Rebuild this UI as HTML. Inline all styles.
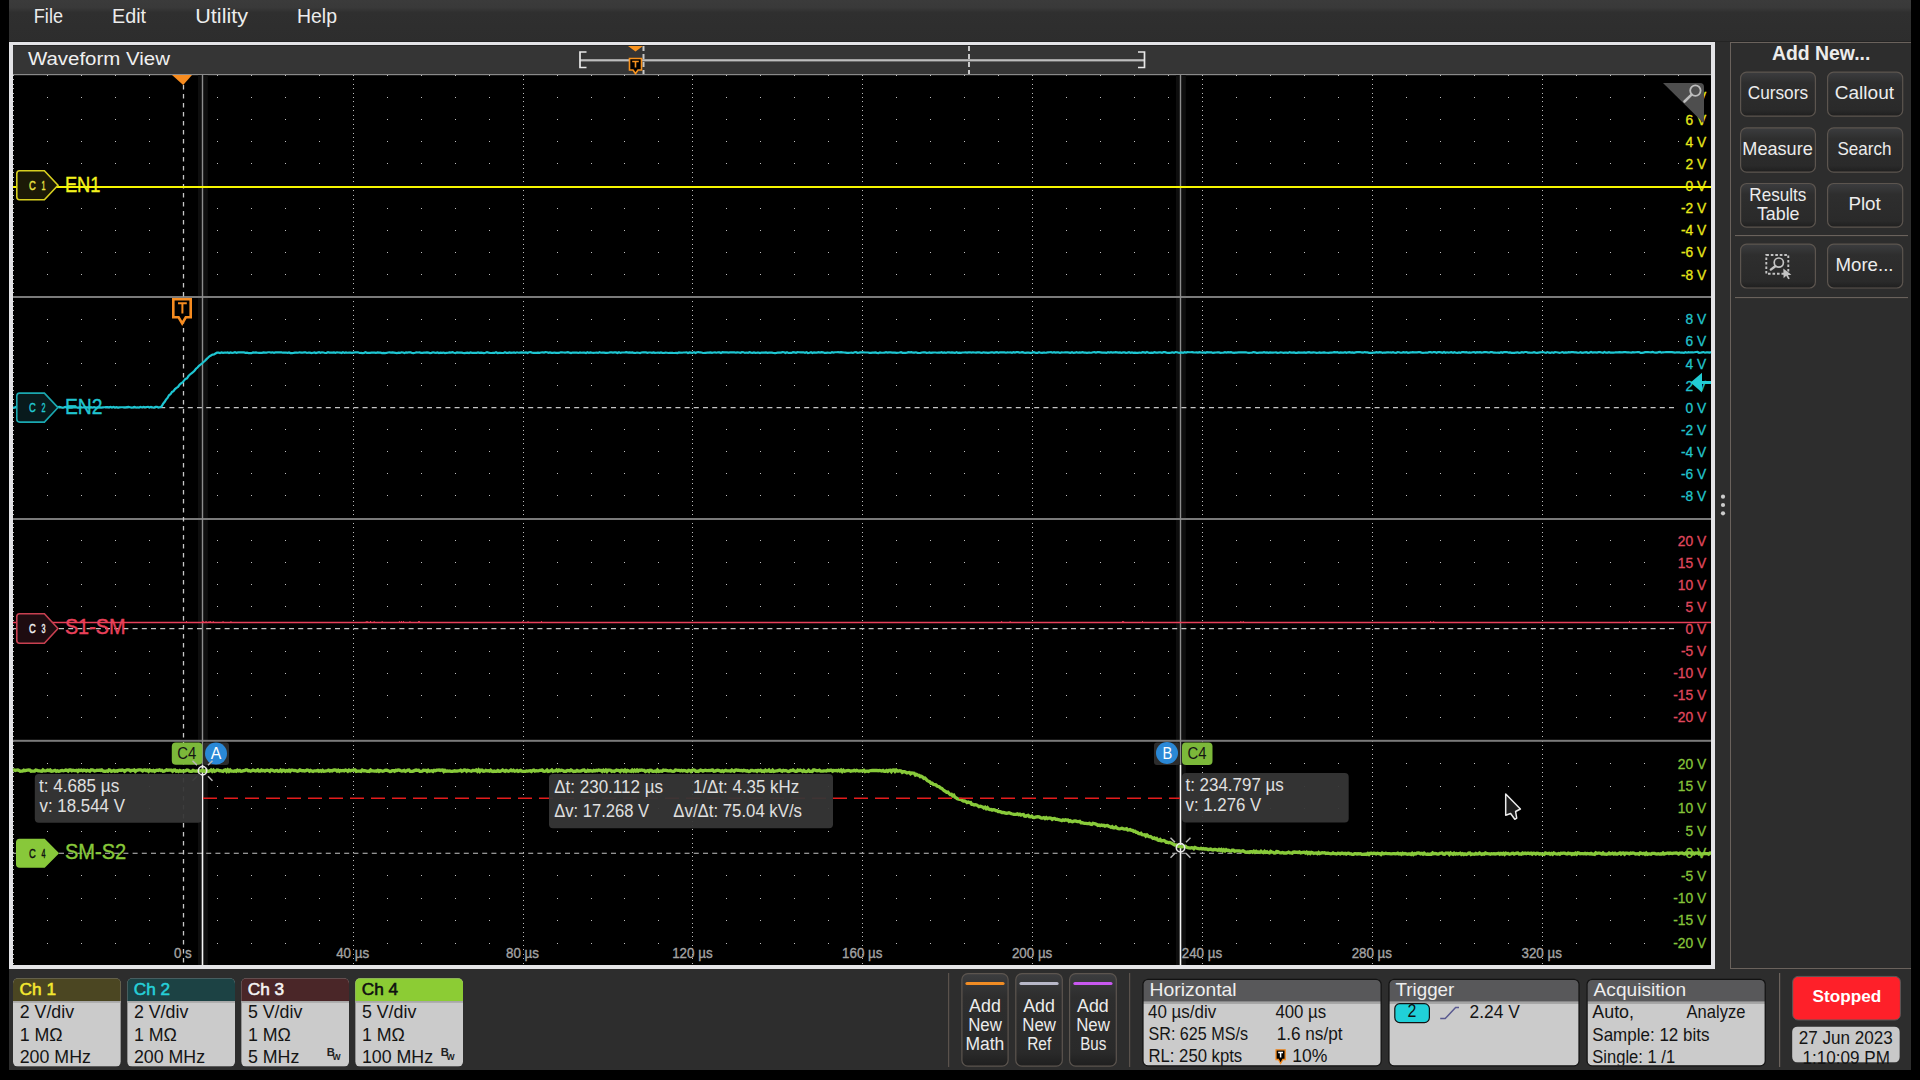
<!DOCTYPE html>
<html><head><meta charset="utf-8"><title>Waveform View</title>
<style>
html,body{margin:0;padding:0;background:#000;}
body{width:1920px;height:1080px;overflow:hidden;position:relative;font-family:"Liberation Sans", sans-serif;}
svg{position:absolute;left:0;top:0;display:block;}
svg text{font-family:"Liberation Sans", sans-serif;}
</style></head><body>
<svg width="1920" height="1080" viewBox="0 0 1920 1080">
<rect x="0" y="0" width="1920" height="1080" fill="#000" /><defs><linearGradient id="mg" x1="0" y1="0" x2="0" y2="1"><stop offset="0" stop-color="#3b3b3b"/><stop offset="0.18" stop-color="#393939"/><stop offset="0.3" stop-color="#2f2f2f"/><stop offset="1" stop-color="#2d2d2d"/></linearGradient><linearGradient id="bg" x1="0" y1="0" x2="0" y2="1"><stop offset="0" stop-color="#3c3d3f"/><stop offset="0.25" stop-color="#2e2e2e"/><stop offset="0.85" stop-color="#2a2a2a"/><stop offset="1" stop-color="#1f1f1f"/></linearGradient></defs><rect x="9" y="0" width="1902" height="42" fill="url(#mg)" /><rect x="9" y="42" width="1902" height="1028" fill="#2d2d2d" /><text x="33.80" y="22.5" font-size="19.33" fill="#ececec" font-weight="normal" textLength="29.18" lengthAdjust="spacingAndGlyphs" >File</text><text x="112.00" y="22.5" font-size="19.33" fill="#ececec" font-weight="normal" textLength="34.01" lengthAdjust="spacingAndGlyphs" >Edit</text><text x="195.30" y="22.5" font-size="19.33" fill="#ececec" font-weight="normal" textLength="52.69" lengthAdjust="spacingAndGlyphs" >Utility</text><text x="297.00" y="22.5" font-size="19.33" fill="#ececec" font-weight="normal" textLength="39.98" lengthAdjust="spacingAndGlyphs" >Help</text><rect x="9" y="42" width="1706" height="927" fill="#e4e4e7" /><rect x="13" y="45" width="1698" height="920" fill="#000" /><rect x="9" y="41" width="1902" height="1" fill="#242424" /><rect x="13" y="45" width="1698" height="29" fill="#353535" /><rect x="13" y="45" width="1698" height="1" fill="#262626" /><rect x="13" y="74" width="1698" height="1.2" fill="#8a8a8a" /><text x="27.90" y="65" font-size="18.75" fill="#f0f0f0" font-weight="normal" textLength="142.03" lengthAdjust="spacingAndGlyphs" >Waveform View</text><rect x="580" y="59.2" width="564" height="2.2" fill="#bdbdbd" /><path d="M586.5,52 H580 V67.5 H586.5" fill="none" stroke="#e8e8e8" stroke-width="1.7"/><path d="M1138,52 H1144.5 V67.5 H1138" fill="none" stroke="#e8e8e8" stroke-width="1.7"/><line x1="643.5" y1="46" x2="643.5" y2="74" stroke="#c8c8c8" stroke-width="2" stroke-dasharray="5 3"/><line x1="969" y1="46" x2="969" y2="74" stroke="#c8c8c8" stroke-width="2" stroke-dasharray="5 3"/><path d="M628,46 L643,46 L635.5,51.5 Z" fill="#f7921e"/><path d="M629.5,58.5 H641.5 V70 H638 L635.5,73.5 L633,70 H629.5 Z" fill="#000" stroke="#f7921e" stroke-width="1.6"/><path d="M632.2,61.5 H638.8 M635.5,61.5 V67.5" stroke="#f7921e" stroke-width="1.6" fill="none"/><rect x="198" y="75" width="9.8" height="890" fill="#0e0e0e" /><rect x="1176" y="75" width="9.8" height="890" fill="#0e0e0e" /><path d="M47,97.5h1M81,97.5h1M115,97.5h1M149,97.5h1M217,97.5h1M251,97.5h1M285,97.5h1M319,97.5h1M387,97.5h1M421,97.5h1M455,97.5h1M489,97.5h1M557,97.5h1M591,97.5h1M624,97.5h1M658,97.5h1M726,97.5h1M760,97.5h1M794,97.5h1M828,97.5h1M896,97.5h1M930,97.5h1M964,97.5h1M998,97.5h1M1066,97.5h1M1100,97.5h1M1134,97.5h1M1168,97.5h1M1236,97.5h1M1270,97.5h1M1304,97.5h1M1338,97.5h1M1406,97.5h1M1440,97.5h1M1474,97.5h1M1508,97.5h1M1576,97.5h1M1610,97.5h1M1644,97.5h1M1678,97.5h1M47,119.5h1M81,119.5h1M115,119.5h1M149,119.5h1M217,119.5h1M251,119.5h1M285,119.5h1M319,119.5h1M387,119.5h1M421,119.5h1M455,119.5h1M489,119.5h1M557,119.5h1M591,119.5h1M624,119.5h1M658,119.5h1M726,119.5h1M760,119.5h1M794,119.5h1M828,119.5h1M896,119.5h1M930,119.5h1M964,119.5h1M998,119.5h1M1066,119.5h1M1100,119.5h1M1134,119.5h1M1168,119.5h1M1236,119.5h1M1270,119.5h1M1304,119.5h1M1338,119.5h1M1406,119.5h1M1440,119.5h1M1474,119.5h1M1508,119.5h1M1576,119.5h1M1610,119.5h1M1644,119.5h1M1678,119.5h1M47,141.5h1M81,141.5h1M115,141.5h1M149,141.5h1M217,141.5h1M251,141.5h1M285,141.5h1M319,141.5h1M387,141.5h1M421,141.5h1M455,141.5h1M489,141.5h1M557,141.5h1M591,141.5h1M624,141.5h1M658,141.5h1M726,141.5h1M760,141.5h1M794,141.5h1M828,141.5h1M896,141.5h1M930,141.5h1M964,141.5h1M998,141.5h1M1066,141.5h1M1100,141.5h1M1134,141.5h1M1168,141.5h1M1236,141.5h1M1270,141.5h1M1304,141.5h1M1338,141.5h1M1406,141.5h1M1440,141.5h1M1474,141.5h1M1508,141.5h1M1576,141.5h1M1610,141.5h1M1644,141.5h1M1678,141.5h1M47,163.5h1M81,163.5h1M115,163.5h1M149,163.5h1M217,163.5h1M251,163.5h1M285,163.5h1M319,163.5h1M387,163.5h1M421,163.5h1M455,163.5h1M489,163.5h1M557,163.5h1M591,163.5h1M624,163.5h1M658,163.5h1M726,163.5h1M760,163.5h1M794,163.5h1M828,163.5h1M896,163.5h1M930,163.5h1M964,163.5h1M998,163.5h1M1066,163.5h1M1100,163.5h1M1134,163.5h1M1168,163.5h1M1236,163.5h1M1270,163.5h1M1304,163.5h1M1338,163.5h1M1406,163.5h1M1440,163.5h1M1474,163.5h1M1508,163.5h1M1576,163.5h1M1610,163.5h1M1644,163.5h1M1678,163.5h1M47,208.5h1M81,208.5h1M115,208.5h1M149,208.5h1M217,208.5h1M251,208.5h1M285,208.5h1M319,208.5h1M387,208.5h1M421,208.5h1M455,208.5h1M489,208.5h1M557,208.5h1M591,208.5h1M624,208.5h1M658,208.5h1M726,208.5h1M760,208.5h1M794,208.5h1M828,208.5h1M896,208.5h1M930,208.5h1M964,208.5h1M998,208.5h1M1066,208.5h1M1100,208.5h1M1134,208.5h1M1168,208.5h1M1236,208.5h1M1270,208.5h1M1304,208.5h1M1338,208.5h1M1406,208.5h1M1440,208.5h1M1474,208.5h1M1508,208.5h1M1576,208.5h1M1610,208.5h1M1644,208.5h1M1678,208.5h1M47,230.5h1M81,230.5h1M115,230.5h1M149,230.5h1M217,230.5h1M251,230.5h1M285,230.5h1M319,230.5h1M387,230.5h1M421,230.5h1M455,230.5h1M489,230.5h1M557,230.5h1M591,230.5h1M624,230.5h1M658,230.5h1M726,230.5h1M760,230.5h1M794,230.5h1M828,230.5h1M896,230.5h1M930,230.5h1M964,230.5h1M998,230.5h1M1066,230.5h1M1100,230.5h1M1134,230.5h1M1168,230.5h1M1236,230.5h1M1270,230.5h1M1304,230.5h1M1338,230.5h1M1406,230.5h1M1440,230.5h1M1474,230.5h1M1508,230.5h1M1576,230.5h1M1610,230.5h1M1644,230.5h1M1678,230.5h1M47,252.5h1M81,252.5h1M115,252.5h1M149,252.5h1M217,252.5h1M251,252.5h1M285,252.5h1M319,252.5h1M387,252.5h1M421,252.5h1M455,252.5h1M489,252.5h1M557,252.5h1M591,252.5h1M624,252.5h1M658,252.5h1M726,252.5h1M760,252.5h1M794,252.5h1M828,252.5h1M896,252.5h1M930,252.5h1M964,252.5h1M998,252.5h1M1066,252.5h1M1100,252.5h1M1134,252.5h1M1168,252.5h1M1236,252.5h1M1270,252.5h1M1304,252.5h1M1338,252.5h1M1406,252.5h1M1440,252.5h1M1474,252.5h1M1508,252.5h1M1576,252.5h1M1610,252.5h1M1644,252.5h1M1678,252.5h1M47,274.5h1M81,274.5h1M115,274.5h1M149,274.5h1M217,274.5h1M251,274.5h1M285,274.5h1M319,274.5h1M387,274.5h1M421,274.5h1M455,274.5h1M489,274.5h1M557,274.5h1M591,274.5h1M624,274.5h1M658,274.5h1M726,274.5h1M760,274.5h1M794,274.5h1M828,274.5h1M896,274.5h1M930,274.5h1M964,274.5h1M998,274.5h1M1066,274.5h1M1100,274.5h1M1134,274.5h1M1168,274.5h1M1236,274.5h1M1270,274.5h1M1304,274.5h1M1338,274.5h1M1406,274.5h1M1440,274.5h1M1474,274.5h1M1508,274.5h1M1576,274.5h1M1610,274.5h1M1644,274.5h1M1678,274.5h1M47,319.5h1M81,319.5h1M115,319.5h1M149,319.5h1M217,319.5h1M251,319.5h1M285,319.5h1M319,319.5h1M387,319.5h1M421,319.5h1M455,319.5h1M489,319.5h1M557,319.5h1M591,319.5h1M624,319.5h1M658,319.5h1M726,319.5h1M760,319.5h1M794,319.5h1M828,319.5h1M896,319.5h1M930,319.5h1M964,319.5h1M998,319.5h1M1066,319.5h1M1100,319.5h1M1134,319.5h1M1168,319.5h1M1236,319.5h1M1270,319.5h1M1304,319.5h1M1338,319.5h1M1406,319.5h1M1440,319.5h1M1474,319.5h1M1508,319.5h1M1576,319.5h1M1610,319.5h1M1644,319.5h1M1678,319.5h1M47,341.5h1M81,341.5h1M115,341.5h1M149,341.5h1M217,341.5h1M251,341.5h1M285,341.5h1M319,341.5h1M387,341.5h1M421,341.5h1M455,341.5h1M489,341.5h1M557,341.5h1M591,341.5h1M624,341.5h1M658,341.5h1M726,341.5h1M760,341.5h1M794,341.5h1M828,341.5h1M896,341.5h1M930,341.5h1M964,341.5h1M998,341.5h1M1066,341.5h1M1100,341.5h1M1134,341.5h1M1168,341.5h1M1236,341.5h1M1270,341.5h1M1304,341.5h1M1338,341.5h1M1406,341.5h1M1440,341.5h1M1474,341.5h1M1508,341.5h1M1576,341.5h1M1610,341.5h1M1644,341.5h1M1678,341.5h1M47,363.5h1M81,363.5h1M115,363.5h1M149,363.5h1M217,363.5h1M251,363.5h1M285,363.5h1M319,363.5h1M387,363.5h1M421,363.5h1M455,363.5h1M489,363.5h1M557,363.5h1M591,363.5h1M624,363.5h1M658,363.5h1M726,363.5h1M760,363.5h1M794,363.5h1M828,363.5h1M896,363.5h1M930,363.5h1M964,363.5h1M998,363.5h1M1066,363.5h1M1100,363.5h1M1134,363.5h1M1168,363.5h1M1236,363.5h1M1270,363.5h1M1304,363.5h1M1338,363.5h1M1406,363.5h1M1440,363.5h1M1474,363.5h1M1508,363.5h1M1576,363.5h1M1610,363.5h1M1644,363.5h1M1678,363.5h1M47,385.5h1M81,385.5h1M115,385.5h1M149,385.5h1M217,385.5h1M251,385.5h1M285,385.5h1M319,385.5h1M387,385.5h1M421,385.5h1M455,385.5h1M489,385.5h1M557,385.5h1M591,385.5h1M624,385.5h1M658,385.5h1M726,385.5h1M760,385.5h1M794,385.5h1M828,385.5h1M896,385.5h1M930,385.5h1M964,385.5h1M998,385.5h1M1066,385.5h1M1100,385.5h1M1134,385.5h1M1168,385.5h1M1236,385.5h1M1270,385.5h1M1304,385.5h1M1338,385.5h1M1406,385.5h1M1440,385.5h1M1474,385.5h1M1508,385.5h1M1576,385.5h1M1610,385.5h1M1644,385.5h1M1678,385.5h1M47,429.5h1M81,429.5h1M115,429.5h1M149,429.5h1M217,429.5h1M251,429.5h1M285,429.5h1M319,429.5h1M387,429.5h1M421,429.5h1M455,429.5h1M489,429.5h1M557,429.5h1M591,429.5h1M624,429.5h1M658,429.5h1M726,429.5h1M760,429.5h1M794,429.5h1M828,429.5h1M896,429.5h1M930,429.5h1M964,429.5h1M998,429.5h1M1066,429.5h1M1100,429.5h1M1134,429.5h1M1168,429.5h1M1236,429.5h1M1270,429.5h1M1304,429.5h1M1338,429.5h1M1406,429.5h1M1440,429.5h1M1474,429.5h1M1508,429.5h1M1576,429.5h1M1610,429.5h1M1644,429.5h1M1678,429.5h1M47,451.5h1M81,451.5h1M115,451.5h1M149,451.5h1M217,451.5h1M251,451.5h1M285,451.5h1M319,451.5h1M387,451.5h1M421,451.5h1M455,451.5h1M489,451.5h1M557,451.5h1M591,451.5h1M624,451.5h1M658,451.5h1M726,451.5h1M760,451.5h1M794,451.5h1M828,451.5h1M896,451.5h1M930,451.5h1M964,451.5h1M998,451.5h1M1066,451.5h1M1100,451.5h1M1134,451.5h1M1168,451.5h1M1236,451.5h1M1270,451.5h1M1304,451.5h1M1338,451.5h1M1406,451.5h1M1440,451.5h1M1474,451.5h1M1508,451.5h1M1576,451.5h1M1610,451.5h1M1644,451.5h1M1678,451.5h1M47,473.5h1M81,473.5h1M115,473.5h1M149,473.5h1M217,473.5h1M251,473.5h1M285,473.5h1M319,473.5h1M387,473.5h1M421,473.5h1M455,473.5h1M489,473.5h1M557,473.5h1M591,473.5h1M624,473.5h1M658,473.5h1M726,473.5h1M760,473.5h1M794,473.5h1M828,473.5h1M896,473.5h1M930,473.5h1M964,473.5h1M998,473.5h1M1066,473.5h1M1100,473.5h1M1134,473.5h1M1168,473.5h1M1236,473.5h1M1270,473.5h1M1304,473.5h1M1338,473.5h1M1406,473.5h1M1440,473.5h1M1474,473.5h1M1508,473.5h1M1576,473.5h1M1610,473.5h1M1644,473.5h1M1678,473.5h1M47,495.5h1M81,495.5h1M115,495.5h1M149,495.5h1M217,495.5h1M251,495.5h1M285,495.5h1M319,495.5h1M387,495.5h1M421,495.5h1M455,495.5h1M489,495.5h1M557,495.5h1M591,495.5h1M624,495.5h1M658,495.5h1M726,495.5h1M760,495.5h1M794,495.5h1M828,495.5h1M896,495.5h1M930,495.5h1M964,495.5h1M998,495.5h1M1066,495.5h1M1100,495.5h1M1134,495.5h1M1168,495.5h1M1236,495.5h1M1270,495.5h1M1304,495.5h1M1338,495.5h1M1406,495.5h1M1440,495.5h1M1474,495.5h1M1508,495.5h1M1576,495.5h1M1610,495.5h1M1644,495.5h1M1678,495.5h1M47,540.5h1M81,540.5h1M115,540.5h1M149,540.5h1M217,540.5h1M251,540.5h1M285,540.5h1M319,540.5h1M387,540.5h1M421,540.5h1M455,540.5h1M489,540.5h1M557,540.5h1M591,540.5h1M624,540.5h1M658,540.5h1M726,540.5h1M760,540.5h1M794,540.5h1M828,540.5h1M896,540.5h1M930,540.5h1M964,540.5h1M998,540.5h1M1066,540.5h1M1100,540.5h1M1134,540.5h1M1168,540.5h1M1236,540.5h1M1270,540.5h1M1304,540.5h1M1338,540.5h1M1406,540.5h1M1440,540.5h1M1474,540.5h1M1508,540.5h1M1576,540.5h1M1610,540.5h1M1644,540.5h1M1678,540.5h1M47,562.5h1M81,562.5h1M115,562.5h1M149,562.5h1M217,562.5h1M251,562.5h1M285,562.5h1M319,562.5h1M387,562.5h1M421,562.5h1M455,562.5h1M489,562.5h1M557,562.5h1M591,562.5h1M624,562.5h1M658,562.5h1M726,562.5h1M760,562.5h1M794,562.5h1M828,562.5h1M896,562.5h1M930,562.5h1M964,562.5h1M998,562.5h1M1066,562.5h1M1100,562.5h1M1134,562.5h1M1168,562.5h1M1236,562.5h1M1270,562.5h1M1304,562.5h1M1338,562.5h1M1406,562.5h1M1440,562.5h1M1474,562.5h1M1508,562.5h1M1576,562.5h1M1610,562.5h1M1644,562.5h1M1678,562.5h1M47,584.5h1M81,584.5h1M115,584.5h1M149,584.5h1M217,584.5h1M251,584.5h1M285,584.5h1M319,584.5h1M387,584.5h1M421,584.5h1M455,584.5h1M489,584.5h1M557,584.5h1M591,584.5h1M624,584.5h1M658,584.5h1M726,584.5h1M760,584.5h1M794,584.5h1M828,584.5h1M896,584.5h1M930,584.5h1M964,584.5h1M998,584.5h1M1066,584.5h1M1100,584.5h1M1134,584.5h1M1168,584.5h1M1236,584.5h1M1270,584.5h1M1304,584.5h1M1338,584.5h1M1406,584.5h1M1440,584.5h1M1474,584.5h1M1508,584.5h1M1576,584.5h1M1610,584.5h1M1644,584.5h1M1678,584.5h1M47,606.5h1M81,606.5h1M115,606.5h1M149,606.5h1M217,606.5h1M251,606.5h1M285,606.5h1M319,606.5h1M387,606.5h1M421,606.5h1M455,606.5h1M489,606.5h1M557,606.5h1M591,606.5h1M624,606.5h1M658,606.5h1M726,606.5h1M760,606.5h1M794,606.5h1M828,606.5h1M896,606.5h1M930,606.5h1M964,606.5h1M998,606.5h1M1066,606.5h1M1100,606.5h1M1134,606.5h1M1168,606.5h1M1236,606.5h1M1270,606.5h1M1304,606.5h1M1338,606.5h1M1406,606.5h1M1440,606.5h1M1474,606.5h1M1508,606.5h1M1576,606.5h1M1610,606.5h1M1644,606.5h1M1678,606.5h1M47,651.5h1M81,651.5h1M115,651.5h1M149,651.5h1M217,651.5h1M251,651.5h1M285,651.5h1M319,651.5h1M387,651.5h1M421,651.5h1M455,651.5h1M489,651.5h1M557,651.5h1M591,651.5h1M624,651.5h1M658,651.5h1M726,651.5h1M760,651.5h1M794,651.5h1M828,651.5h1M896,651.5h1M930,651.5h1M964,651.5h1M998,651.5h1M1066,651.5h1M1100,651.5h1M1134,651.5h1M1168,651.5h1M1236,651.5h1M1270,651.5h1M1304,651.5h1M1338,651.5h1M1406,651.5h1M1440,651.5h1M1474,651.5h1M1508,651.5h1M1576,651.5h1M1610,651.5h1M1644,651.5h1M1678,651.5h1M47,673.5h1M81,673.5h1M115,673.5h1M149,673.5h1M217,673.5h1M251,673.5h1M285,673.5h1M319,673.5h1M387,673.5h1M421,673.5h1M455,673.5h1M489,673.5h1M557,673.5h1M591,673.5h1M624,673.5h1M658,673.5h1M726,673.5h1M760,673.5h1M794,673.5h1M828,673.5h1M896,673.5h1M930,673.5h1M964,673.5h1M998,673.5h1M1066,673.5h1M1100,673.5h1M1134,673.5h1M1168,673.5h1M1236,673.5h1M1270,673.5h1M1304,673.5h1M1338,673.5h1M1406,673.5h1M1440,673.5h1M1474,673.5h1M1508,673.5h1M1576,673.5h1M1610,673.5h1M1644,673.5h1M1678,673.5h1M47,695.5h1M81,695.5h1M115,695.5h1M149,695.5h1M217,695.5h1M251,695.5h1M285,695.5h1M319,695.5h1M387,695.5h1M421,695.5h1M455,695.5h1M489,695.5h1M557,695.5h1M591,695.5h1M624,695.5h1M658,695.5h1M726,695.5h1M760,695.5h1M794,695.5h1M828,695.5h1M896,695.5h1M930,695.5h1M964,695.5h1M998,695.5h1M1066,695.5h1M1100,695.5h1M1134,695.5h1M1168,695.5h1M1236,695.5h1M1270,695.5h1M1304,695.5h1M1338,695.5h1M1406,695.5h1M1440,695.5h1M1474,695.5h1M1508,695.5h1M1576,695.5h1M1610,695.5h1M1644,695.5h1M1678,695.5h1M47,717.5h1M81,717.5h1M115,717.5h1M149,717.5h1M217,717.5h1M251,717.5h1M285,717.5h1M319,717.5h1M387,717.5h1M421,717.5h1M455,717.5h1M489,717.5h1M557,717.5h1M591,717.5h1M624,717.5h1M658,717.5h1M726,717.5h1M760,717.5h1M794,717.5h1M828,717.5h1M896,717.5h1M930,717.5h1M964,717.5h1M998,717.5h1M1066,717.5h1M1100,717.5h1M1134,717.5h1M1168,717.5h1M1236,717.5h1M1270,717.5h1M1304,717.5h1M1338,717.5h1M1406,717.5h1M1440,717.5h1M1474,717.5h1M1508,717.5h1M1576,717.5h1M1610,717.5h1M1644,717.5h1M1678,717.5h1M47,763.5h1M81,763.5h1M115,763.5h1M149,763.5h1M217,763.5h1M251,763.5h1M285,763.5h1M319,763.5h1M387,763.5h1M421,763.5h1M455,763.5h1M489,763.5h1M557,763.5h1M591,763.5h1M624,763.5h1M658,763.5h1M726,763.5h1M760,763.5h1M794,763.5h1M828,763.5h1M896,763.5h1M930,763.5h1M964,763.5h1M998,763.5h1M1066,763.5h1M1100,763.5h1M1134,763.5h1M1168,763.5h1M1236,763.5h1M1270,763.5h1M1304,763.5h1M1338,763.5h1M1406,763.5h1M1440,763.5h1M1474,763.5h1M1508,763.5h1M1576,763.5h1M1610,763.5h1M1644,763.5h1M1678,763.5h1M47,786.5h1M81,786.5h1M115,786.5h1M149,786.5h1M217,786.5h1M251,786.5h1M285,786.5h1M319,786.5h1M387,786.5h1M421,786.5h1M455,786.5h1M489,786.5h1M557,786.5h1M591,786.5h1M624,786.5h1M658,786.5h1M726,786.5h1M760,786.5h1M794,786.5h1M828,786.5h1M896,786.5h1M930,786.5h1M964,786.5h1M998,786.5h1M1066,786.5h1M1100,786.5h1M1134,786.5h1M1168,786.5h1M1236,786.5h1M1270,786.5h1M1304,786.5h1M1338,786.5h1M1406,786.5h1M1440,786.5h1M1474,786.5h1M1508,786.5h1M1576,786.5h1M1610,786.5h1M1644,786.5h1M1678,786.5h1M47,808.5h1M81,808.5h1M115,808.5h1M149,808.5h1M217,808.5h1M251,808.5h1M285,808.5h1M319,808.5h1M387,808.5h1M421,808.5h1M455,808.5h1M489,808.5h1M557,808.5h1M591,808.5h1M624,808.5h1M658,808.5h1M726,808.5h1M760,808.5h1M794,808.5h1M828,808.5h1M896,808.5h1M930,808.5h1M964,808.5h1M998,808.5h1M1066,808.5h1M1100,808.5h1M1134,808.5h1M1168,808.5h1M1236,808.5h1M1270,808.5h1M1304,808.5h1M1338,808.5h1M1406,808.5h1M1440,808.5h1M1474,808.5h1M1508,808.5h1M1576,808.5h1M1610,808.5h1M1644,808.5h1M1678,808.5h1M47,831.5h1M81,831.5h1M115,831.5h1M149,831.5h1M217,831.5h1M251,831.5h1M285,831.5h1M319,831.5h1M387,831.5h1M421,831.5h1M455,831.5h1M489,831.5h1M557,831.5h1M591,831.5h1M624,831.5h1M658,831.5h1M726,831.5h1M760,831.5h1M794,831.5h1M828,831.5h1M896,831.5h1M930,831.5h1M964,831.5h1M998,831.5h1M1066,831.5h1M1100,831.5h1M1134,831.5h1M1168,831.5h1M1236,831.5h1M1270,831.5h1M1304,831.5h1M1338,831.5h1M1406,831.5h1M1440,831.5h1M1474,831.5h1M1508,831.5h1M1576,831.5h1M1610,831.5h1M1644,831.5h1M1678,831.5h1M47,875.5h1M81,875.5h1M115,875.5h1M149,875.5h1M217,875.5h1M251,875.5h1M285,875.5h1M319,875.5h1M387,875.5h1M421,875.5h1M455,875.5h1M489,875.5h1M557,875.5h1M591,875.5h1M624,875.5h1M658,875.5h1M726,875.5h1M760,875.5h1M794,875.5h1M828,875.5h1M896,875.5h1M930,875.5h1M964,875.5h1M998,875.5h1M1066,875.5h1M1100,875.5h1M1134,875.5h1M1168,875.5h1M1236,875.5h1M1270,875.5h1M1304,875.5h1M1338,875.5h1M1406,875.5h1M1440,875.5h1M1474,875.5h1M1508,875.5h1M1576,875.5h1M1610,875.5h1M1644,875.5h1M1678,875.5h1M47,898.5h1M81,898.5h1M115,898.5h1M149,898.5h1M217,898.5h1M251,898.5h1M285,898.5h1M319,898.5h1M387,898.5h1M421,898.5h1M455,898.5h1M489,898.5h1M557,898.5h1M591,898.5h1M624,898.5h1M658,898.5h1M726,898.5h1M760,898.5h1M794,898.5h1M828,898.5h1M896,898.5h1M930,898.5h1M964,898.5h1M998,898.5h1M1066,898.5h1M1100,898.5h1M1134,898.5h1M1168,898.5h1M1236,898.5h1M1270,898.5h1M1304,898.5h1M1338,898.5h1M1406,898.5h1M1440,898.5h1M1474,898.5h1M1508,898.5h1M1576,898.5h1M1610,898.5h1M1644,898.5h1M1678,898.5h1M47,920.5h1M81,920.5h1M115,920.5h1M149,920.5h1M217,920.5h1M251,920.5h1M285,920.5h1M319,920.5h1M387,920.5h1M421,920.5h1M455,920.5h1M489,920.5h1M557,920.5h1M591,920.5h1M624,920.5h1M658,920.5h1M726,920.5h1M760,920.5h1M794,920.5h1M828,920.5h1M896,920.5h1M930,920.5h1M964,920.5h1M998,920.5h1M1066,920.5h1M1100,920.5h1M1134,920.5h1M1168,920.5h1M1236,920.5h1M1270,920.5h1M1304,920.5h1M1338,920.5h1M1406,920.5h1M1440,920.5h1M1474,920.5h1M1508,920.5h1M1576,920.5h1M1610,920.5h1M1644,920.5h1M1678,920.5h1M47,943.5h1M81,943.5h1M115,943.5h1M149,943.5h1M217,943.5h1M251,943.5h1M285,943.5h1M319,943.5h1M387,943.5h1M421,943.5h1M455,943.5h1M489,943.5h1M557,943.5h1M591,943.5h1M624,943.5h1M658,943.5h1M726,943.5h1M760,943.5h1M794,943.5h1M828,943.5h1M896,943.5h1M930,943.5h1M964,943.5h1M998,943.5h1M1066,943.5h1M1100,943.5h1M1134,943.5h1M1168,943.5h1M1236,943.5h1M1270,943.5h1M1304,943.5h1M1338,943.5h1M1406,943.5h1M1440,943.5h1M1474,943.5h1M1508,943.5h1M1576,943.5h1M1610,943.5h1M1644,943.5h1M1678,943.5h1M47,75.5h1M81,75.5h1M115,75.5h1M149,75.5h1M183,75.5h1M217,75.5h1M251,75.5h1M285,75.5h1M319,75.5h1M353,75.5h1M387,75.5h1M421,75.5h1M455,75.5h1M489,75.5h1M523,75.5h1M557,75.5h1M591,75.5h1M624,75.5h1M658,75.5h1M692,75.5h1M726,75.5h1M760,75.5h1M794,75.5h1M828,75.5h1M862,75.5h1M896,75.5h1M930,75.5h1M964,75.5h1M998,75.5h1M1032,75.5h1M1066,75.5h1M1100,75.5h1M1134,75.5h1M1168,75.5h1M1202,75.5h1M1236,75.5h1M1270,75.5h1M1304,75.5h1M1338,75.5h1M1372,75.5h1M1406,75.5h1M1440,75.5h1M1474,75.5h1M1508,75.5h1M1542,75.5h1M1576,75.5h1M1610,75.5h1M1644,75.5h1M1678,75.5h1M353,75.5h1M523,75.5h1M692,75.5h1M862,75.5h1M1032,75.5h1M1202,75.5h1M1372,75.5h1M1542,75.5h1M13,75.5h1.2M353,79.5h1M523,79.5h1M692,79.5h1M862,79.5h1M1032,79.5h1M1202,79.5h1M1372,79.5h1M1542,79.5h1M13,79.5h1.2M353,84.5h1M523,84.5h1M692,84.5h1M862,84.5h1M1032,84.5h1M1202,84.5h1M1372,84.5h1M1542,84.5h1M13,84.5h1.2M353,88.5h1M523,88.5h1M692,88.5h1M862,88.5h1M1032,88.5h1M1202,88.5h1M1372,88.5h1M1542,88.5h1M13,88.5h1.2M353,93.5h1M523,93.5h1M692,93.5h1M862,93.5h1M1032,93.5h1M1202,93.5h1M1372,93.5h1M1542,93.5h1M13,93.5h1.2M353,97.5h1M523,97.5h1M692,97.5h1M862,97.5h1M1032,97.5h1M1202,97.5h1M1372,97.5h1M1542,97.5h1M13,97.5h1.2M353,101.5h1M523,101.5h1M692,101.5h1M862,101.5h1M1032,101.5h1M1202,101.5h1M1372,101.5h1M1542,101.5h1M13,101.5h1.2M353,106.5h1M523,106.5h1M692,106.5h1M862,106.5h1M1032,106.5h1M1202,106.5h1M1372,106.5h1M1542,106.5h1M13,106.5h1.2M353,110.5h1M523,110.5h1M692,110.5h1M862,110.5h1M1032,110.5h1M1202,110.5h1M1372,110.5h1M1542,110.5h1M13,110.5h1.2M353,115.5h1M523,115.5h1M692,115.5h1M862,115.5h1M1032,115.5h1M1202,115.5h1M1372,115.5h1M1542,115.5h1M13,115.5h1.2M353,119.5h1M523,119.5h1M692,119.5h1M862,119.5h1M1032,119.5h1M1202,119.5h1M1372,119.5h1M1542,119.5h1M13,119.5h1.2M353,124.5h1M523,124.5h1M692,124.5h1M862,124.5h1M1032,124.5h1M1202,124.5h1M1372,124.5h1M1542,124.5h1M13,124.5h1.2M353,128.5h1M523,128.5h1M692,128.5h1M862,128.5h1M1032,128.5h1M1202,128.5h1M1372,128.5h1M1542,128.5h1M13,128.5h1.2M353,133.5h1M523,133.5h1M692,133.5h1M862,133.5h1M1032,133.5h1M1202,133.5h1M1372,133.5h1M1542,133.5h1M13,133.5h1.2M353,137.5h1M523,137.5h1M692,137.5h1M862,137.5h1M1032,137.5h1M1202,137.5h1M1372,137.5h1M1542,137.5h1M13,137.5h1.2M353,141.5h1M523,141.5h1M692,141.5h1M862,141.5h1M1032,141.5h1M1202,141.5h1M1372,141.5h1M1542,141.5h1M13,141.5h1.2M353,146.5h1M523,146.5h1M692,146.5h1M862,146.5h1M1032,146.5h1M1202,146.5h1M1372,146.5h1M1542,146.5h1M13,146.5h1.2M353,150.5h1M523,150.5h1M692,150.5h1M862,150.5h1M1032,150.5h1M1202,150.5h1M1372,150.5h1M1542,150.5h1M13,150.5h1.2M353,155.5h1M523,155.5h1M692,155.5h1M862,155.5h1M1032,155.5h1M1202,155.5h1M1372,155.5h1M1542,155.5h1M13,155.5h1.2M353,159.5h1M523,159.5h1M692,159.5h1M862,159.5h1M1032,159.5h1M1202,159.5h1M1372,159.5h1M1542,159.5h1M13,159.5h1.2M353,164.5h1M523,164.5h1M692,164.5h1M862,164.5h1M1032,164.5h1M1202,164.5h1M1372,164.5h1M1542,164.5h1M13,164.5h1.2M353,168.5h1M523,168.5h1M692,168.5h1M862,168.5h1M1032,168.5h1M1202,168.5h1M1372,168.5h1M1542,168.5h1M13,168.5h1.2M353,172.5h1M523,172.5h1M692,172.5h1M862,172.5h1M1032,172.5h1M1202,172.5h1M1372,172.5h1M1542,172.5h1M13,172.5h1.2M353,177.5h1M523,177.5h1M692,177.5h1M862,177.5h1M1032,177.5h1M1202,177.5h1M1372,177.5h1M1542,177.5h1M13,177.5h1.2M353,181.5h1M523,181.5h1M692,181.5h1M862,181.5h1M1032,181.5h1M1202,181.5h1M1372,181.5h1M1542,181.5h1M13,181.5h1.2M353,186.5h1M523,186.5h1M692,186.5h1M862,186.5h1M1032,186.5h1M1202,186.5h1M1372,186.5h1M1542,186.5h1M13,186.5h1.2M353,190.5h1M523,190.5h1M692,190.5h1M862,190.5h1M1032,190.5h1M1202,190.5h1M1372,190.5h1M1542,190.5h1M13,190.5h1.2M353,195.5h1M523,195.5h1M692,195.5h1M862,195.5h1M1032,195.5h1M1202,195.5h1M1372,195.5h1M1542,195.5h1M13,195.5h1.2M353,199.5h1M523,199.5h1M692,199.5h1M862,199.5h1M1032,199.5h1M1202,199.5h1M1372,199.5h1M1542,199.5h1M13,199.5h1.2M353,204.5h1M523,204.5h1M692,204.5h1M862,204.5h1M1032,204.5h1M1202,204.5h1M1372,204.5h1M1542,204.5h1M13,204.5h1.2M353,208.5h1M523,208.5h1M692,208.5h1M862,208.5h1M1032,208.5h1M1202,208.5h1M1372,208.5h1M1542,208.5h1M13,208.5h1.2M353,212.5h1M523,212.5h1M692,212.5h1M862,212.5h1M1032,212.5h1M1202,212.5h1M1372,212.5h1M1542,212.5h1M13,212.5h1.2M353,217.5h1M523,217.5h1M692,217.5h1M862,217.5h1M1032,217.5h1M1202,217.5h1M1372,217.5h1M1542,217.5h1M13,217.5h1.2M353,221.5h1M523,221.5h1M692,221.5h1M862,221.5h1M1032,221.5h1M1202,221.5h1M1372,221.5h1M1542,221.5h1M13,221.5h1.2M353,226.5h1M523,226.5h1M692,226.5h1M862,226.5h1M1032,226.5h1M1202,226.5h1M1372,226.5h1M1542,226.5h1M13,226.5h1.2M353,230.5h1M523,230.5h1M692,230.5h1M862,230.5h1M1032,230.5h1M1202,230.5h1M1372,230.5h1M1542,230.5h1M13,230.5h1.2M353,235.5h1M523,235.5h1M692,235.5h1M862,235.5h1M1032,235.5h1M1202,235.5h1M1372,235.5h1M1542,235.5h1M13,235.5h1.2M353,239.5h1M523,239.5h1M692,239.5h1M862,239.5h1M1032,239.5h1M1202,239.5h1M1372,239.5h1M1542,239.5h1M13,239.5h1.2M353,244.5h1M523,244.5h1M692,244.5h1M862,244.5h1M1032,244.5h1M1202,244.5h1M1372,244.5h1M1542,244.5h1M13,244.5h1.2M353,248.5h1M523,248.5h1M692,248.5h1M862,248.5h1M1032,248.5h1M1202,248.5h1M1372,248.5h1M1542,248.5h1M13,248.5h1.2M353,252.5h1M523,252.5h1M692,252.5h1M862,252.5h1M1032,252.5h1M1202,252.5h1M1372,252.5h1M1542,252.5h1M13,252.5h1.2M353,257.5h1M523,257.5h1M692,257.5h1M862,257.5h1M1032,257.5h1M1202,257.5h1M1372,257.5h1M1542,257.5h1M13,257.5h1.2M353,261.5h1M523,261.5h1M692,261.5h1M862,261.5h1M1032,261.5h1M1202,261.5h1M1372,261.5h1M1542,261.5h1M13,261.5h1.2M353,266.5h1M523,266.5h1M692,266.5h1M862,266.5h1M1032,266.5h1M1202,266.5h1M1372,266.5h1M1542,266.5h1M13,266.5h1.2M353,270.5h1M523,270.5h1M692,270.5h1M862,270.5h1M1032,270.5h1M1202,270.5h1M1372,270.5h1M1542,270.5h1M13,270.5h1.2M353,275.5h1M523,275.5h1M692,275.5h1M862,275.5h1M1032,275.5h1M1202,275.5h1M1372,275.5h1M1542,275.5h1M13,275.5h1.2M353,279.5h1M523,279.5h1M692,279.5h1M862,279.5h1M1032,279.5h1M1202,279.5h1M1372,279.5h1M1542,279.5h1M13,279.5h1.2M353,283.5h1M523,283.5h1M692,283.5h1M862,283.5h1M1032,283.5h1M1202,283.5h1M1372,283.5h1M1542,283.5h1M13,283.5h1.2M353,288.5h1M523,288.5h1M692,288.5h1M862,288.5h1M1032,288.5h1M1202,288.5h1M1372,288.5h1M1542,288.5h1M13,288.5h1.2M353,292.5h1M523,292.5h1M692,292.5h1M862,292.5h1M1032,292.5h1M1202,292.5h1M1372,292.5h1M1542,292.5h1M13,292.5h1.2M353,297.5h1M523,297.5h1M692,297.5h1M862,297.5h1M1032,297.5h1M1202,297.5h1M1372,297.5h1M1542,297.5h1M13,297.5h1.2M353,301.5h1M523,301.5h1M692,301.5h1M862,301.5h1M1032,301.5h1M1202,301.5h1M1372,301.5h1M1542,301.5h1M13,301.5h1.2M353,306.5h1M523,306.5h1M692,306.5h1M862,306.5h1M1032,306.5h1M1202,306.5h1M1372,306.5h1M1542,306.5h1M13,306.5h1.2M353,310.5h1M523,310.5h1M692,310.5h1M862,310.5h1M1032,310.5h1M1202,310.5h1M1372,310.5h1M1542,310.5h1M13,310.5h1.2M353,315.5h1M523,315.5h1M692,315.5h1M862,315.5h1M1032,315.5h1M1202,315.5h1M1372,315.5h1M1542,315.5h1M13,315.5h1.2M353,319.5h1M523,319.5h1M692,319.5h1M862,319.5h1M1032,319.5h1M1202,319.5h1M1372,319.5h1M1542,319.5h1M13,319.5h1.2M353,323.5h1M523,323.5h1M692,323.5h1M862,323.5h1M1032,323.5h1M1202,323.5h1M1372,323.5h1M1542,323.5h1M13,323.5h1.2M353,328.5h1M523,328.5h1M692,328.5h1M862,328.5h1M1032,328.5h1M1202,328.5h1M1372,328.5h1M1542,328.5h1M13,328.5h1.2M353,332.5h1M523,332.5h1M692,332.5h1M862,332.5h1M1032,332.5h1M1202,332.5h1M1372,332.5h1M1542,332.5h1M13,332.5h1.2M353,337.5h1M523,337.5h1M692,337.5h1M862,337.5h1M1032,337.5h1M1202,337.5h1M1372,337.5h1M1542,337.5h1M13,337.5h1.2M353,341.5h1M523,341.5h1M692,341.5h1M862,341.5h1M1032,341.5h1M1202,341.5h1M1372,341.5h1M1542,341.5h1M13,341.5h1.2M353,346.5h1M523,346.5h1M692,346.5h1M862,346.5h1M1032,346.5h1M1202,346.5h1M1372,346.5h1M1542,346.5h1M13,346.5h1.2M353,350.5h1M523,350.5h1M692,350.5h1M862,350.5h1M1032,350.5h1M1202,350.5h1M1372,350.5h1M1542,350.5h1M13,350.5h1.2M353,355.5h1M523,355.5h1M692,355.5h1M862,355.5h1M1032,355.5h1M1202,355.5h1M1372,355.5h1M1542,355.5h1M13,355.5h1.2M353,359.5h1M523,359.5h1M692,359.5h1M862,359.5h1M1032,359.5h1M1202,359.5h1M1372,359.5h1M1542,359.5h1M13,359.5h1.2M353,363.5h1M523,363.5h1M692,363.5h1M862,363.5h1M1032,363.5h1M1202,363.5h1M1372,363.5h1M1542,363.5h1M13,363.5h1.2M353,368.5h1M523,368.5h1M692,368.5h1M862,368.5h1M1032,368.5h1M1202,368.5h1M1372,368.5h1M1542,368.5h1M13,368.5h1.2M353,372.5h1M523,372.5h1M692,372.5h1M862,372.5h1M1032,372.5h1M1202,372.5h1M1372,372.5h1M1542,372.5h1M13,372.5h1.2M353,377.5h1M523,377.5h1M692,377.5h1M862,377.5h1M1032,377.5h1M1202,377.5h1M1372,377.5h1M1542,377.5h1M13,377.5h1.2M353,381.5h1M523,381.5h1M692,381.5h1M862,381.5h1M1032,381.5h1M1202,381.5h1M1372,381.5h1M1542,381.5h1M13,381.5h1.2M353,386.5h1M523,386.5h1M692,386.5h1M862,386.5h1M1032,386.5h1M1202,386.5h1M1372,386.5h1M1542,386.5h1M13,386.5h1.2M353,390.5h1M523,390.5h1M692,390.5h1M862,390.5h1M1032,390.5h1M1202,390.5h1M1372,390.5h1M1542,390.5h1M13,390.5h1.2M353,394.5h1M523,394.5h1M692,394.5h1M862,394.5h1M1032,394.5h1M1202,394.5h1M1372,394.5h1M1542,394.5h1M13,394.5h1.2M353,399.5h1M523,399.5h1M692,399.5h1M862,399.5h1M1032,399.5h1M1202,399.5h1M1372,399.5h1M1542,399.5h1M13,399.5h1.2M353,403.5h1M523,403.5h1M692,403.5h1M862,403.5h1M1032,403.5h1M1202,403.5h1M1372,403.5h1M1542,403.5h1M13,403.5h1.2M353,408.5h1M523,408.5h1M692,408.5h1M862,408.5h1M1032,408.5h1M1202,408.5h1M1372,408.5h1M1542,408.5h1M13,408.5h1.2M353,412.5h1M523,412.5h1M692,412.5h1M862,412.5h1M1032,412.5h1M1202,412.5h1M1372,412.5h1M1542,412.5h1M13,412.5h1.2M353,417.5h1M523,417.5h1M692,417.5h1M862,417.5h1M1032,417.5h1M1202,417.5h1M1372,417.5h1M1542,417.5h1M13,417.5h1.2M353,421.5h1M523,421.5h1M692,421.5h1M862,421.5h1M1032,421.5h1M1202,421.5h1M1372,421.5h1M1542,421.5h1M13,421.5h1.2M353,426.5h1M523,426.5h1M692,426.5h1M862,426.5h1M1032,426.5h1M1202,426.5h1M1372,426.5h1M1542,426.5h1M13,426.5h1.2M353,430.5h1M523,430.5h1M692,430.5h1M862,430.5h1M1032,430.5h1M1202,430.5h1M1372,430.5h1M1542,430.5h1M13,430.5h1.2M353,434.5h1M523,434.5h1M692,434.5h1M862,434.5h1M1032,434.5h1M1202,434.5h1M1372,434.5h1M1542,434.5h1M13,434.5h1.2M353,439.5h1M523,439.5h1M692,439.5h1M862,439.5h1M1032,439.5h1M1202,439.5h1M1372,439.5h1M1542,439.5h1M13,439.5h1.2M353,443.5h1M523,443.5h1M692,443.5h1M862,443.5h1M1032,443.5h1M1202,443.5h1M1372,443.5h1M1542,443.5h1M13,443.5h1.2M353,448.5h1M523,448.5h1M692,448.5h1M862,448.5h1M1032,448.5h1M1202,448.5h1M1372,448.5h1M1542,448.5h1M13,448.5h1.2M353,452.5h1M523,452.5h1M692,452.5h1M862,452.5h1M1032,452.5h1M1202,452.5h1M1372,452.5h1M1542,452.5h1M13,452.5h1.2M353,457.5h1M523,457.5h1M692,457.5h1M862,457.5h1M1032,457.5h1M1202,457.5h1M1372,457.5h1M1542,457.5h1M13,457.5h1.2M353,461.5h1M523,461.5h1M692,461.5h1M862,461.5h1M1032,461.5h1M1202,461.5h1M1372,461.5h1M1542,461.5h1M13,461.5h1.2M353,466.5h1M523,466.5h1M692,466.5h1M862,466.5h1M1032,466.5h1M1202,466.5h1M1372,466.5h1M1542,466.5h1M13,466.5h1.2M353,470.5h1M523,470.5h1M692,470.5h1M862,470.5h1M1032,470.5h1M1202,470.5h1M1372,470.5h1M1542,470.5h1M13,470.5h1.2M353,474.5h1M523,474.5h1M692,474.5h1M862,474.5h1M1032,474.5h1M1202,474.5h1M1372,474.5h1M1542,474.5h1M13,474.5h1.2M353,479.5h1M523,479.5h1M692,479.5h1M862,479.5h1M1032,479.5h1M1202,479.5h1M1372,479.5h1M1542,479.5h1M13,479.5h1.2M353,483.5h1M523,483.5h1M692,483.5h1M862,483.5h1M1032,483.5h1M1202,483.5h1M1372,483.5h1M1542,483.5h1M13,483.5h1.2M353,488.5h1M523,488.5h1M692,488.5h1M862,488.5h1M1032,488.5h1M1202,488.5h1M1372,488.5h1M1542,488.5h1M13,488.5h1.2M353,492.5h1M523,492.5h1M692,492.5h1M862,492.5h1M1032,492.5h1M1202,492.5h1M1372,492.5h1M1542,492.5h1M13,492.5h1.2M353,497.5h1M523,497.5h1M692,497.5h1M862,497.5h1M1032,497.5h1M1202,497.5h1M1372,497.5h1M1542,497.5h1M13,497.5h1.2M353,501.5h1M523,501.5h1M692,501.5h1M862,501.5h1M1032,501.5h1M1202,501.5h1M1372,501.5h1M1542,501.5h1M13,501.5h1.2M353,505.5h1M523,505.5h1M692,505.5h1M862,505.5h1M1032,505.5h1M1202,505.5h1M1372,505.5h1M1542,505.5h1M13,505.5h1.2M353,510.5h1M523,510.5h1M692,510.5h1M862,510.5h1M1032,510.5h1M1202,510.5h1M1372,510.5h1M1542,510.5h1M13,510.5h1.2M353,514.5h1M523,514.5h1M692,514.5h1M862,514.5h1M1032,514.5h1M1202,514.5h1M1372,514.5h1M1542,514.5h1M13,514.5h1.2M353,518.5h1M523,518.5h1M692,518.5h1M862,518.5h1M1032,518.5h1M1202,518.5h1M1372,518.5h1M1542,518.5h1M13,518.5h1.2M353,523.5h1M523,523.5h1M692,523.5h1M862,523.5h1M1032,523.5h1M1202,523.5h1M1372,523.5h1M1542,523.5h1M13,523.5h1.2M353,527.5h1M523,527.5h1M692,527.5h1M862,527.5h1M1032,527.5h1M1202,527.5h1M1372,527.5h1M1542,527.5h1M13,527.5h1.2M353,532.5h1M523,532.5h1M692,532.5h1M862,532.5h1M1032,532.5h1M1202,532.5h1M1372,532.5h1M1542,532.5h1M13,532.5h1.2M353,536.5h1M523,536.5h1M692,536.5h1M862,536.5h1M1032,536.5h1M1202,536.5h1M1372,536.5h1M1542,536.5h1M13,536.5h1.2M353,540.5h1M523,540.5h1M692,540.5h1M862,540.5h1M1032,540.5h1M1202,540.5h1M1372,540.5h1M1542,540.5h1M13,540.5h1.2M353,545.5h1M523,545.5h1M692,545.5h1M862,545.5h1M1032,545.5h1M1202,545.5h1M1372,545.5h1M1542,545.5h1M13,545.5h1.2M353,549.5h1M523,549.5h1M692,549.5h1M862,549.5h1M1032,549.5h1M1202,549.5h1M1372,549.5h1M1542,549.5h1M13,549.5h1.2M353,554.5h1M523,554.5h1M692,554.5h1M862,554.5h1M1032,554.5h1M1202,554.5h1M1372,554.5h1M1542,554.5h1M13,554.5h1.2M353,558.5h1M523,558.5h1M692,558.5h1M862,558.5h1M1032,558.5h1M1202,558.5h1M1372,558.5h1M1542,558.5h1M13,558.5h1.2M353,563.5h1M523,563.5h1M692,563.5h1M862,563.5h1M1032,563.5h1M1202,563.5h1M1372,563.5h1M1542,563.5h1M13,563.5h1.2M353,567.5h1M523,567.5h1M692,567.5h1M862,567.5h1M1032,567.5h1M1202,567.5h1M1372,567.5h1M1542,567.5h1M13,567.5h1.2M353,571.5h1M523,571.5h1M692,571.5h1M862,571.5h1M1032,571.5h1M1202,571.5h1M1372,571.5h1M1542,571.5h1M13,571.5h1.2M353,576.5h1M523,576.5h1M692,576.5h1M862,576.5h1M1032,576.5h1M1202,576.5h1M1372,576.5h1M1542,576.5h1M13,576.5h1.2M353,580.5h1M523,580.5h1M692,580.5h1M862,580.5h1M1032,580.5h1M1202,580.5h1M1372,580.5h1M1542,580.5h1M13,580.5h1.2M353,585.5h1M523,585.5h1M692,585.5h1M862,585.5h1M1032,585.5h1M1202,585.5h1M1372,585.5h1M1542,585.5h1M13,585.5h1.2M353,589.5h1M523,589.5h1M692,589.5h1M862,589.5h1M1032,589.5h1M1202,589.5h1M1372,589.5h1M1542,589.5h1M13,589.5h1.2M353,594.5h1M523,594.5h1M692,594.5h1M862,594.5h1M1032,594.5h1M1202,594.5h1M1372,594.5h1M1542,594.5h1M13,594.5h1.2M353,598.5h1M523,598.5h1M692,598.5h1M862,598.5h1M1032,598.5h1M1202,598.5h1M1372,598.5h1M1542,598.5h1M13,598.5h1.2M353,603.5h1M523,603.5h1M692,603.5h1M862,603.5h1M1032,603.5h1M1202,603.5h1M1372,603.5h1M1542,603.5h1M13,603.5h1.2M353,607.5h1M523,607.5h1M692,607.5h1M862,607.5h1M1032,607.5h1M1202,607.5h1M1372,607.5h1M1542,607.5h1M13,607.5h1.2M353,611.5h1M523,611.5h1M692,611.5h1M862,611.5h1M1032,611.5h1M1202,611.5h1M1372,611.5h1M1542,611.5h1M13,611.5h1.2M353,616.5h1M523,616.5h1M692,616.5h1M862,616.5h1M1032,616.5h1M1202,616.5h1M1372,616.5h1M1542,616.5h1M13,616.5h1.2M353,620.5h1M523,620.5h1M692,620.5h1M862,620.5h1M1032,620.5h1M1202,620.5h1M1372,620.5h1M1542,620.5h1M13,620.5h1.2M353,625.5h1M523,625.5h1M692,625.5h1M862,625.5h1M1032,625.5h1M1202,625.5h1M1372,625.5h1M1542,625.5h1M13,625.5h1.2M353,629.5h1M523,629.5h1M692,629.5h1M862,629.5h1M1032,629.5h1M1202,629.5h1M1372,629.5h1M1542,629.5h1M13,629.5h1.2M353,634.5h1M523,634.5h1M692,634.5h1M862,634.5h1M1032,634.5h1M1202,634.5h1M1372,634.5h1M1542,634.5h1M13,634.5h1.2M353,638.5h1M523,638.5h1M692,638.5h1M862,638.5h1M1032,638.5h1M1202,638.5h1M1372,638.5h1M1542,638.5h1M13,638.5h1.2M353,643.5h1M523,643.5h1M692,643.5h1M862,643.5h1M1032,643.5h1M1202,643.5h1M1372,643.5h1M1542,643.5h1M13,643.5h1.2M353,647.5h1M523,647.5h1M692,647.5h1M862,647.5h1M1032,647.5h1M1202,647.5h1M1372,647.5h1M1542,647.5h1M13,647.5h1.2M353,651.5h1M523,651.5h1M692,651.5h1M862,651.5h1M1032,651.5h1M1202,651.5h1M1372,651.5h1M1542,651.5h1M13,651.5h1.2M353,656.5h1M523,656.5h1M692,656.5h1M862,656.5h1M1032,656.5h1M1202,656.5h1M1372,656.5h1M1542,656.5h1M13,656.5h1.2M353,660.5h1M523,660.5h1M692,660.5h1M862,660.5h1M1032,660.5h1M1202,660.5h1M1372,660.5h1M1542,660.5h1M13,660.5h1.2M353,665.5h1M523,665.5h1M692,665.5h1M862,665.5h1M1032,665.5h1M1202,665.5h1M1372,665.5h1M1542,665.5h1M13,665.5h1.2M353,669.5h1M523,669.5h1M692,669.5h1M862,669.5h1M1032,669.5h1M1202,669.5h1M1372,669.5h1M1542,669.5h1M13,669.5h1.2M353,674.5h1M523,674.5h1M692,674.5h1M862,674.5h1M1032,674.5h1M1202,674.5h1M1372,674.5h1M1542,674.5h1M13,674.5h1.2M353,678.5h1M523,678.5h1M692,678.5h1M862,678.5h1M1032,678.5h1M1202,678.5h1M1372,678.5h1M1542,678.5h1M13,678.5h1.2M353,682.5h1M523,682.5h1M692,682.5h1M862,682.5h1M1032,682.5h1M1202,682.5h1M1372,682.5h1M1542,682.5h1M13,682.5h1.2M353,687.5h1M523,687.5h1M692,687.5h1M862,687.5h1M1032,687.5h1M1202,687.5h1M1372,687.5h1M1542,687.5h1M13,687.5h1.2M353,691.5h1M523,691.5h1M692,691.5h1M862,691.5h1M1032,691.5h1M1202,691.5h1M1372,691.5h1M1542,691.5h1M13,691.5h1.2M353,696.5h1M523,696.5h1M692,696.5h1M862,696.5h1M1032,696.5h1M1202,696.5h1M1372,696.5h1M1542,696.5h1M13,696.5h1.2M353,700.5h1M523,700.5h1M692,700.5h1M862,700.5h1M1032,700.5h1M1202,700.5h1M1372,700.5h1M1542,700.5h1M13,700.5h1.2M353,705.5h1M523,705.5h1M692,705.5h1M862,705.5h1M1032,705.5h1M1202,705.5h1M1372,705.5h1M1542,705.5h1M13,705.5h1.2M353,709.5h1M523,709.5h1M692,709.5h1M862,709.5h1M1032,709.5h1M1202,709.5h1M1372,709.5h1M1542,709.5h1M13,709.5h1.2M353,714.5h1M523,714.5h1M692,714.5h1M862,714.5h1M1032,714.5h1M1202,714.5h1M1372,714.5h1M1542,714.5h1M13,714.5h1.2M353,718.5h1M523,718.5h1M692,718.5h1M862,718.5h1M1032,718.5h1M1202,718.5h1M1372,718.5h1M1542,718.5h1M13,718.5h1.2M353,722.5h1M523,722.5h1M692,722.5h1M862,722.5h1M1032,722.5h1M1202,722.5h1M1372,722.5h1M1542,722.5h1M13,722.5h1.2M353,727.5h1M523,727.5h1M692,727.5h1M862,727.5h1M1032,727.5h1M1202,727.5h1M1372,727.5h1M1542,727.5h1M13,727.5h1.2M353,731.5h1M523,731.5h1M692,731.5h1M862,731.5h1M1032,731.5h1M1202,731.5h1M1372,731.5h1M1542,731.5h1M13,731.5h1.2M353,736.5h1M523,736.5h1M692,736.5h1M862,736.5h1M1032,736.5h1M1202,736.5h1M1372,736.5h1M1542,736.5h1M13,736.5h1.2M353,740.5h1M523,740.5h1M692,740.5h1M862,740.5h1M1032,740.5h1M1202,740.5h1M1372,740.5h1M1542,740.5h1M13,740.5h1.2M353,741.5h1M523,741.5h1M692,741.5h1M862,741.5h1M1032,741.5h1M1202,741.5h1M1372,741.5h1M1542,741.5h1M13,741.5h1.2M353,745.5h1M523,745.5h1M692,745.5h1M862,745.5h1M1032,745.5h1M1202,745.5h1M1372,745.5h1M1542,745.5h1M13,745.5h1.2M353,749.5h1M523,749.5h1M692,749.5h1M862,749.5h1M1032,749.5h1M1202,749.5h1M1372,749.5h1M1542,749.5h1M13,749.5h1.2M353,754.5h1M523,754.5h1M692,754.5h1M862,754.5h1M1032,754.5h1M1202,754.5h1M1372,754.5h1M1542,754.5h1M13,754.5h1.2M353,758.5h1M523,758.5h1M692,758.5h1M862,758.5h1M1032,758.5h1M1202,758.5h1M1372,758.5h1M1542,758.5h1M13,758.5h1.2M353,763.5h1M523,763.5h1M692,763.5h1M862,763.5h1M1032,763.5h1M1202,763.5h1M1372,763.5h1M1542,763.5h1M13,763.5h1.2M353,767.5h1M523,767.5h1M692,767.5h1M862,767.5h1M1032,767.5h1M1202,767.5h1M1372,767.5h1M1542,767.5h1M13,767.5h1.2M353,772.5h1M523,772.5h1M692,772.5h1M862,772.5h1M1032,772.5h1M1202,772.5h1M1372,772.5h1M1542,772.5h1M13,772.5h1.2M353,776.5h1M523,776.5h1M692,776.5h1M862,776.5h1M1032,776.5h1M1202,776.5h1M1372,776.5h1M1542,776.5h1M13,776.5h1.2M353,781.5h1M523,781.5h1M692,781.5h1M862,781.5h1M1032,781.5h1M1202,781.5h1M1372,781.5h1M1542,781.5h1M13,781.5h1.2M353,785.5h1M523,785.5h1M692,785.5h1M862,785.5h1M1032,785.5h1M1202,785.5h1M1372,785.5h1M1542,785.5h1M13,785.5h1.2M353,789.5h1M523,789.5h1M692,789.5h1M862,789.5h1M1032,789.5h1M1202,789.5h1M1372,789.5h1M1542,789.5h1M13,789.5h1.2M353,794.5h1M523,794.5h1M692,794.5h1M862,794.5h1M1032,794.5h1M1202,794.5h1M1372,794.5h1M1542,794.5h1M13,794.5h1.2M353,798.5h1M523,798.5h1M692,798.5h1M862,798.5h1M1032,798.5h1M1202,798.5h1M1372,798.5h1M1542,798.5h1M13,798.5h1.2M353,803.5h1M523,803.5h1M692,803.5h1M862,803.5h1M1032,803.5h1M1202,803.5h1M1372,803.5h1M1542,803.5h1M13,803.5h1.2M353,807.5h1M523,807.5h1M692,807.5h1M862,807.5h1M1032,807.5h1M1202,807.5h1M1372,807.5h1M1542,807.5h1M13,807.5h1.2M353,812.5h1M523,812.5h1M692,812.5h1M862,812.5h1M1032,812.5h1M1202,812.5h1M1372,812.5h1M1542,812.5h1M13,812.5h1.2M353,816.5h1M523,816.5h1M692,816.5h1M862,816.5h1M1032,816.5h1M1202,816.5h1M1372,816.5h1M1542,816.5h1M13,816.5h1.2M353,821.5h1M523,821.5h1M692,821.5h1M862,821.5h1M1032,821.5h1M1202,821.5h1M1372,821.5h1M1542,821.5h1M13,821.5h1.2M353,825.5h1M523,825.5h1M692,825.5h1M862,825.5h1M1032,825.5h1M1202,825.5h1M1372,825.5h1M1542,825.5h1M13,825.5h1.2M353,829.5h1M523,829.5h1M692,829.5h1M862,829.5h1M1032,829.5h1M1202,829.5h1M1372,829.5h1M1542,829.5h1M13,829.5h1.2M353,834.5h1M523,834.5h1M692,834.5h1M862,834.5h1M1032,834.5h1M1202,834.5h1M1372,834.5h1M1542,834.5h1M13,834.5h1.2M353,838.5h1M523,838.5h1M692,838.5h1M862,838.5h1M1032,838.5h1M1202,838.5h1M1372,838.5h1M1542,838.5h1M13,838.5h1.2M353,843.5h1M523,843.5h1M692,843.5h1M862,843.5h1M1032,843.5h1M1202,843.5h1M1372,843.5h1M1542,843.5h1M13,843.5h1.2M353,847.5h1M523,847.5h1M692,847.5h1M862,847.5h1M1032,847.5h1M1202,847.5h1M1372,847.5h1M1542,847.5h1M13,847.5h1.2M353,852.5h1M523,852.5h1M692,852.5h1M862,852.5h1M1032,852.5h1M1202,852.5h1M1372,852.5h1M1542,852.5h1M13,852.5h1.2M353,856.5h1M523,856.5h1M692,856.5h1M862,856.5h1M1032,856.5h1M1202,856.5h1M1372,856.5h1M1542,856.5h1M13,856.5h1.2M353,860.5h1M523,860.5h1M692,860.5h1M862,860.5h1M1032,860.5h1M1202,860.5h1M1372,860.5h1M1542,860.5h1M13,860.5h1.2M353,865.5h1M523,865.5h1M692,865.5h1M862,865.5h1M1032,865.5h1M1202,865.5h1M1372,865.5h1M1542,865.5h1M13,865.5h1.2M353,869.5h1M523,869.5h1M692,869.5h1M862,869.5h1M1032,869.5h1M1202,869.5h1M1372,869.5h1M1542,869.5h1M13,869.5h1.2M353,874.5h1M523,874.5h1M692,874.5h1M862,874.5h1M1032,874.5h1M1202,874.5h1M1372,874.5h1M1542,874.5h1M13,874.5h1.2M353,878.5h1M523,878.5h1M692,878.5h1M862,878.5h1M1032,878.5h1M1202,878.5h1M1372,878.5h1M1542,878.5h1M13,878.5h1.2M353,883.5h1M523,883.5h1M692,883.5h1M862,883.5h1M1032,883.5h1M1202,883.5h1M1372,883.5h1M1542,883.5h1M13,883.5h1.2M353,887.5h1M523,887.5h1M692,887.5h1M862,887.5h1M1032,887.5h1M1202,887.5h1M1372,887.5h1M1542,887.5h1M13,887.5h1.2M353,892.5h1M523,892.5h1M692,892.5h1M862,892.5h1M1032,892.5h1M1202,892.5h1M1372,892.5h1M1542,892.5h1M13,892.5h1.2M353,896.5h1M523,896.5h1M692,896.5h1M862,896.5h1M1032,896.5h1M1202,896.5h1M1372,896.5h1M1542,896.5h1M13,896.5h1.2M353,900.5h1M523,900.5h1M692,900.5h1M862,900.5h1M1032,900.5h1M1202,900.5h1M1372,900.5h1M1542,900.5h1M13,900.5h1.2M353,905.5h1M523,905.5h1M692,905.5h1M862,905.5h1M1032,905.5h1M1202,905.5h1M1372,905.5h1M1542,905.5h1M13,905.5h1.2M353,909.5h1M523,909.5h1M692,909.5h1M862,909.5h1M1032,909.5h1M1202,909.5h1M1372,909.5h1M1542,909.5h1M13,909.5h1.2M353,914.5h1M523,914.5h1M692,914.5h1M862,914.5h1M1032,914.5h1M1202,914.5h1M1372,914.5h1M1542,914.5h1M13,914.5h1.2M353,918.5h1M523,918.5h1M692,918.5h1M862,918.5h1M1032,918.5h1M1202,918.5h1M1372,918.5h1M1542,918.5h1M13,918.5h1.2M353,923.5h1M523,923.5h1M692,923.5h1M862,923.5h1M1032,923.5h1M1202,923.5h1M1372,923.5h1M1542,923.5h1M13,923.5h1.2M353,927.5h1M523,927.5h1M692,927.5h1M862,927.5h1M1032,927.5h1M1202,927.5h1M1372,927.5h1M1542,927.5h1M13,927.5h1.2M353,932.5h1M523,932.5h1M692,932.5h1M862,932.5h1M1032,932.5h1M1202,932.5h1M1372,932.5h1M1542,932.5h1M13,932.5h1.2M353,936.5h1M523,936.5h1M692,936.5h1M862,936.5h1M1032,936.5h1M1202,936.5h1M1372,936.5h1M1542,936.5h1M13,936.5h1.2M353,940.5h1M523,940.5h1M692,940.5h1M862,940.5h1M1032,940.5h1M1202,940.5h1M1372,940.5h1M1542,940.5h1M13,940.5h1.2M353,945.5h1M523,945.5h1M692,945.5h1M862,945.5h1M1032,945.5h1M1202,945.5h1M1372,945.5h1M1542,945.5h1M13,945.5h1.2M353,949.5h1M523,949.5h1M692,949.5h1M862,949.5h1M1032,949.5h1M1202,949.5h1M1372,949.5h1M1542,949.5h1M13,949.5h1.2M353,954.5h1M523,954.5h1M692,954.5h1M862,954.5h1M1032,954.5h1M1202,954.5h1M1372,954.5h1M1542,954.5h1M13,954.5h1.2M353,958.5h1M523,958.5h1M692,958.5h1M862,958.5h1M1032,958.5h1M1202,958.5h1M1372,958.5h1M1542,958.5h1M13,958.5h1.2M353,963.5h1M523,963.5h1M692,963.5h1M862,963.5h1M1032,963.5h1M1202,963.5h1M1372,963.5h1M1542,963.5h1M13,963.5h1.2" stroke="#bdbdbd" stroke-width="1" fill="none" shape-rendering="crispEdges"/><rect x="13" y="296" width="1698" height="2" fill="#7a7a7a" /><rect x="13" y="518" width="1698" height="2" fill="#7a7a7a" /><rect x="13" y="739.8" width="1698" height="2" fill="#7a7a7a" /><line x1="13" y1="186.5" x2="1711" y2="186.5" stroke="#c4c4c4" stroke-width="1.15" stroke-dasharray="5 4.2"/><line x1="13" y1="407.6" x2="1676" y2="407.6" stroke="#c4c4c4" stroke-width="1.15" stroke-dasharray="5 4.2"/><line x1="13" y1="628.6" x2="1676" y2="628.6" stroke="#c4c4c4" stroke-width="1.15" stroke-dasharray="5 4.2"/><line x1="13" y1="853.2" x2="1711" y2="853.2" stroke="#c4c4c4" stroke-width="1.15" stroke-dasharray="5 4.2"/><line x1="183.5" y1="85" x2="183.5" y2="965" stroke="#c8c8c8" stroke-width="1.3" stroke-dasharray="4.5 4.5"/><line x1="202.5" y1="75" x2="202.5" y2="765" stroke="#8c8c8c" stroke-width="1.4"/><line x1="202.5" y1="765" x2="202.5" y2="965" stroke="#f4f4f4" stroke-width="1.6"/><line x1="1180.5" y1="75" x2="1180.5" y2="765" stroke="#8c8c8c" stroke-width="1.4"/><line x1="1180.5" y1="765" x2="1180.5" y2="965" stroke="#f4f4f4" stroke-width="1.6"/><rect x="1682.0" y="90.8" width="25.7" height="13.5" fill="#000" /><text x="1685.52" y="102.39999999999999" font-size="14.83" fill="#e8e81a" font-weight="normal" textLength="20.70" lengthAdjust="spacingAndGlyphs" stroke="#e8e81a" stroke-width="0.3">8 V</text><rect x="1682.0" y="112.9" width="25.7" height="13.5" fill="#000" /><text x="1685.52" y="124.53999999999999" font-size="14.83" fill="#e8e81a" font-weight="normal" textLength="20.70" lengthAdjust="spacingAndGlyphs" stroke="#e8e81a" stroke-width="0.3">6 V</text><rect x="1682.0" y="135.1" width="25.7" height="13.5" fill="#000" /><text x="1685.52" y="146.67999999999998" font-size="14.83" fill="#e8e81a" font-weight="normal" textLength="20.70" lengthAdjust="spacingAndGlyphs" stroke="#e8e81a" stroke-width="0.3">4 V</text><rect x="1682.0" y="157.2" width="25.7" height="13.5" fill="#000" /><text x="1685.52" y="168.82" font-size="14.83" fill="#e8e81a" font-weight="normal" textLength="20.70" lengthAdjust="spacingAndGlyphs" stroke="#e8e81a" stroke-width="0.3">2 V</text><rect x="1682.0" y="179.4" width="25.7" height="13.5" fill="#000" /><text x="1685.52" y="190.96" font-size="14.83" fill="#e8e81a" font-weight="normal" textLength="20.70" lengthAdjust="spacingAndGlyphs" stroke="#e8e81a" stroke-width="0.3">0 V</text><rect x="1677.4" y="201.5" width="30.3" height="13.5" fill="#000" /><text x="1680.90" y="213.1" font-size="14.83" fill="#e8e81a" font-weight="normal" textLength="25.29" lengthAdjust="spacingAndGlyphs" stroke="#e8e81a" stroke-width="0.3">-2 V</text><rect x="1677.4" y="223.6" width="30.3" height="13.5" fill="#000" /><text x="1680.90" y="235.23999999999998" font-size="14.83" fill="#e8e81a" font-weight="normal" textLength="25.29" lengthAdjust="spacingAndGlyphs" stroke="#e8e81a" stroke-width="0.3">-4 V</text><rect x="1677.4" y="245.8" width="30.3" height="13.5" fill="#000" /><text x="1680.90" y="257.38000000000005" font-size="14.83" fill="#e8e81a" font-weight="normal" textLength="25.29" lengthAdjust="spacingAndGlyphs" stroke="#e8e81a" stroke-width="0.3">-6 V</text><rect x="1677.4" y="267.9" width="30.3" height="13.5" fill="#000" /><text x="1680.90" y="279.52000000000004" font-size="14.83" fill="#e8e81a" font-weight="normal" textLength="25.29" lengthAdjust="spacingAndGlyphs" stroke="#e8e81a" stroke-width="0.3">-8 V</text><rect x="1682.0" y="312.8" width="25.7" height="13.5" fill="#000" /><text x="1685.52" y="324.40000000000003" font-size="14.83" fill="#22c4cc" font-weight="normal" textLength="20.70" lengthAdjust="spacingAndGlyphs" stroke="#22c4cc" stroke-width="0.3">8 V</text><rect x="1682.0" y="334.9" width="25.7" height="13.5" fill="#000" /><text x="1685.52" y="346.48" font-size="14.83" fill="#22c4cc" font-weight="normal" textLength="20.70" lengthAdjust="spacingAndGlyphs" stroke="#22c4cc" stroke-width="0.3">6 V</text><rect x="1682.0" y="357.0" width="25.7" height="13.5" fill="#000" /><text x="1685.52" y="368.56000000000006" font-size="14.83" fill="#22c4cc" font-weight="normal" textLength="20.70" lengthAdjust="spacingAndGlyphs" stroke="#22c4cc" stroke-width="0.3">4 V</text><rect x="1682.0" y="379.0" width="25.7" height="13.5" fill="#000" /><text x="1685.52" y="390.64000000000004" font-size="14.83" fill="#22c4cc" font-weight="normal" textLength="20.70" lengthAdjust="spacingAndGlyphs" stroke="#22c4cc" stroke-width="0.3">2 V</text><rect x="1682.0" y="401.1" width="25.7" height="13.5" fill="#000" /><text x="1685.52" y="412.72" font-size="14.83" fill="#22c4cc" font-weight="normal" textLength="20.70" lengthAdjust="spacingAndGlyphs" stroke="#22c4cc" stroke-width="0.3">0 V</text><rect x="1677.4" y="423.2" width="30.3" height="13.5" fill="#000" /><text x="1680.90" y="434.8" font-size="14.83" fill="#22c4cc" font-weight="normal" textLength="25.29" lengthAdjust="spacingAndGlyphs" stroke="#22c4cc" stroke-width="0.3">-2 V</text><rect x="1677.4" y="445.3" width="30.3" height="13.5" fill="#000" /><text x="1680.90" y="456.88" font-size="14.83" fill="#22c4cc" font-weight="normal" textLength="25.29" lengthAdjust="spacingAndGlyphs" stroke="#22c4cc" stroke-width="0.3">-4 V</text><rect x="1677.4" y="467.4" width="30.3" height="13.5" fill="#000" /><text x="1680.90" y="478.96000000000004" font-size="14.83" fill="#22c4cc" font-weight="normal" textLength="25.29" lengthAdjust="spacingAndGlyphs" stroke="#22c4cc" stroke-width="0.3">-6 V</text><rect x="1677.4" y="489.4" width="30.3" height="13.5" fill="#000" /><text x="1680.90" y="501.04" font-size="14.83" fill="#22c4cc" font-weight="normal" textLength="25.29" lengthAdjust="spacingAndGlyphs" stroke="#22c4cc" stroke-width="0.3">-8 V</text><rect x="1674.3" y="534.0" width="33.4" height="13.5" fill="#000" /><text x="1677.83" y="545.6" font-size="14.83" fill="#e0485e" font-weight="normal" textLength="28.36" lengthAdjust="spacingAndGlyphs" stroke="#e0485e" stroke-width="0.3">20 V</text><rect x="1674.3" y="556.1" width="33.4" height="13.5" fill="#000" /><text x="1677.83" y="567.7" font-size="14.83" fill="#e0485e" font-weight="normal" textLength="28.36" lengthAdjust="spacingAndGlyphs" stroke="#e0485e" stroke-width="0.3">15 V</text><rect x="1674.3" y="578.2" width="33.4" height="13.5" fill="#000" /><text x="1677.83" y="589.8000000000001" font-size="14.83" fill="#e0485e" font-weight="normal" textLength="28.36" lengthAdjust="spacingAndGlyphs" stroke="#e0485e" stroke-width="0.3">10 V</text><rect x="1682.0" y="600.3" width="25.7" height="13.5" fill="#000" /><text x="1685.52" y="611.9" font-size="14.83" fill="#e0485e" font-weight="normal" textLength="20.70" lengthAdjust="spacingAndGlyphs" stroke="#e0485e" stroke-width="0.3">5 V</text><rect x="1682.0" y="622.4" width="25.7" height="13.5" fill="#000" /><text x="1685.52" y="634.0" font-size="14.83" fill="#e0485e" font-weight="normal" textLength="20.70" lengthAdjust="spacingAndGlyphs" stroke="#e0485e" stroke-width="0.3">0 V</text><rect x="1677.4" y="644.5" width="30.3" height="13.5" fill="#000" /><text x="1680.90" y="656.1" font-size="14.83" fill="#e0485e" font-weight="normal" textLength="25.29" lengthAdjust="spacingAndGlyphs" stroke="#e0485e" stroke-width="0.3">-5 V</text><rect x="1669.7" y="666.6" width="38.0" height="13.5" fill="#000" /><text x="1673.25" y="678.2" font-size="14.83" fill="#e0485e" font-weight="normal" textLength="32.96" lengthAdjust="spacingAndGlyphs" stroke="#e0485e" stroke-width="0.3">-10 V</text><rect x="1669.7" y="688.7" width="38.0" height="13.5" fill="#000" /><text x="1673.25" y="700.3000000000001" font-size="14.83" fill="#e0485e" font-weight="normal" textLength="32.96" lengthAdjust="spacingAndGlyphs" stroke="#e0485e" stroke-width="0.3">-15 V</text><rect x="1669.7" y="710.8" width="38.0" height="13.5" fill="#000" /><text x="1673.25" y="722.4" font-size="14.83" fill="#e0485e" font-weight="normal" textLength="32.96" lengthAdjust="spacingAndGlyphs" stroke="#e0485e" stroke-width="0.3">-20 V</text><rect x="1674.3" y="756.9" width="33.4" height="13.5" fill="#000" /><text x="1677.83" y="768.5" font-size="14.83" fill="#86c43a" font-weight="normal" textLength="28.36" lengthAdjust="spacingAndGlyphs" stroke="#86c43a" stroke-width="0.3">20 V</text><rect x="1674.3" y="779.3" width="33.4" height="13.5" fill="#000" /><text x="1677.83" y="790.9" font-size="14.83" fill="#86c43a" font-weight="normal" textLength="28.36" lengthAdjust="spacingAndGlyphs" stroke="#86c43a" stroke-width="0.3">15 V</text><rect x="1674.3" y="801.7" width="33.4" height="13.5" fill="#000" /><text x="1677.83" y="813.3" font-size="14.83" fill="#86c43a" font-weight="normal" textLength="28.36" lengthAdjust="spacingAndGlyphs" stroke="#86c43a" stroke-width="0.3">10 V</text><rect x="1682.0" y="824.1" width="25.7" height="13.5" fill="#000" /><text x="1685.52" y="835.6999999999999" font-size="14.83" fill="#86c43a" font-weight="normal" textLength="20.70" lengthAdjust="spacingAndGlyphs" stroke="#86c43a" stroke-width="0.3">5 V</text><rect x="1682.0" y="846.5" width="25.7" height="13.5" fill="#000" /><text x="1685.52" y="858.1" font-size="14.83" fill="#86c43a" font-weight="normal" textLength="20.70" lengthAdjust="spacingAndGlyphs" stroke="#86c43a" stroke-width="0.3">0 V</text><rect x="1677.4" y="868.9" width="30.3" height="13.5" fill="#000" /><text x="1680.90" y="880.5" font-size="14.83" fill="#86c43a" font-weight="normal" textLength="25.29" lengthAdjust="spacingAndGlyphs" stroke="#86c43a" stroke-width="0.3">-5 V</text><rect x="1669.7" y="891.3" width="38.0" height="13.5" fill="#000" /><text x="1673.25" y="902.9" font-size="14.83" fill="#86c43a" font-weight="normal" textLength="32.96" lengthAdjust="spacingAndGlyphs" stroke="#86c43a" stroke-width="0.3">-10 V</text><rect x="1669.7" y="913.7" width="38.0" height="13.5" fill="#000" /><text x="1673.25" y="925.3" font-size="14.83" fill="#86c43a" font-weight="normal" textLength="32.96" lengthAdjust="spacingAndGlyphs" stroke="#86c43a" stroke-width="0.3">-15 V</text><rect x="1669.7" y="936.1" width="38.0" height="13.5" fill="#000" /><text x="1673.25" y="947.6999999999999" font-size="14.83" fill="#86c43a" font-weight="normal" textLength="32.96" lengthAdjust="spacingAndGlyphs" stroke="#86c43a" stroke-width="0.3">-20 V</text><text x="173.88" y="958.4" font-size="14.68" fill="#a4a4a4" font-weight="normal" textLength="17.82" lengthAdjust="spacingAndGlyphs" stroke="#a4a4a4" stroke-width="0.35">0 s</text><text x="336.18" y="958.4" font-size="14.68" fill="#a4a4a4" font-weight="normal" textLength="32.95" lengthAdjust="spacingAndGlyphs" stroke="#a4a4a4" stroke-width="0.35">40 µs</text><text x="506.04" y="958.4" font-size="14.68" fill="#a4a4a4" font-weight="normal" textLength="32.95" lengthAdjust="spacingAndGlyphs" stroke="#a4a4a4" stroke-width="0.35">80 µs</text><text x="672.19" y="958.4" font-size="14.68" fill="#a4a4a4" font-weight="normal" textLength="40.38" lengthAdjust="spacingAndGlyphs" stroke="#a4a4a4" stroke-width="0.35">120 µs</text><text x="842.05" y="958.4" font-size="14.68" fill="#a4a4a4" font-weight="normal" textLength="40.38" lengthAdjust="spacingAndGlyphs" stroke="#a4a4a4" stroke-width="0.35">160 µs</text><text x="1011.91" y="958.4" font-size="14.68" fill="#a4a4a4" font-weight="normal" textLength="40.38" lengthAdjust="spacingAndGlyphs" stroke="#a4a4a4" stroke-width="0.35">200 µs</text><text x="1181.77" y="958.4" font-size="14.68" fill="#a4a4a4" font-weight="normal" textLength="40.38" lengthAdjust="spacingAndGlyphs" stroke="#a4a4a4" stroke-width="0.35">240 µs</text><text x="1351.63" y="958.4" font-size="14.68" fill="#a4a4a4" font-weight="normal" textLength="40.38" lengthAdjust="spacingAndGlyphs" stroke="#a4a4a4" stroke-width="0.35">280 µs</text><text x="1521.49" y="958.4" font-size="14.68" fill="#a4a4a4" font-weight="normal" textLength="40.38" lengthAdjust="spacingAndGlyphs" stroke="#a4a4a4" stroke-width="0.35">320 µs</text><line x1="13" y1="187" x2="1711" y2="187" stroke="#f6f600" stroke-width="2.2"/><path d="M13.0,407.71 L14.5,407.70 L16.0,406.90 L17.5,406.92 L19.0,407.60 L20.5,407.51 L22.0,407.45 L23.5,407.12 L25.0,407.39 L26.5,407.39 L28.0,407.36 L29.5,406.98 L31.0,407.23 L32.5,407.19 L34.0,407.49 L35.5,407.73 L37.0,407.69 L38.5,407.32 L40.0,407.23 L41.5,407.07 L43.0,406.86 L44.5,406.85 L46.0,407.25 L47.5,407.11 L49.0,407.17 L50.5,407.63 L52.0,407.30 L53.5,407.33 L55.0,407.03 L56.5,406.84 L58.0,407.11 L59.5,406.94 L61.0,407.28 L62.5,407.72 L64.0,407.42 L65.5,406.98 L67.0,407.62 L68.5,407.53 L70.0,407.47 L71.5,407.63 L73.0,407.50 L74.5,407.52 L76.0,407.13 L77.5,407.69 L79.0,407.67 L80.5,406.95 L82.0,407.48 L83.5,407.45 L85.0,407.22 L86.5,407.28 L88.0,407.24 L89.5,407.63 L91.0,407.25 L92.5,407.54 L94.0,407.11 L95.5,407.59 L97.0,407.60 L98.5,407.21 L100.0,407.30 L101.5,407.62 L103.0,407.44 L104.5,407.23 L106.0,406.99 L107.5,407.08 L109.0,407.41 L110.5,406.93 L112.0,407.60 L113.5,407.02 L115.0,407.60 L116.5,407.06 L118.0,407.64 L119.5,407.41 L121.0,407.23 L122.5,407.24 L124.0,407.36 L125.5,407.30 L127.0,407.05 L128.5,406.96 L130.0,407.23 L131.5,407.61 L133.0,407.33 L134.5,406.84 L136.0,407.51 L137.5,407.42 L139.0,407.58 L140.5,406.94 L142.0,407.43 L143.5,406.81 L145.0,407.35 L146.5,407.01 L148.0,406.96 L149.5,407.55 L151.0,406.85 L152.5,407.23 L154.0,407.52 L155.5,406.97 L157.0,406.94 L158.5,407.54 L160.0,407.13 L161.5,406.67 L163.0,403.87 L164.5,401.99 L166.0,399.64 L167.5,397.91 L169.0,395.20 L170.5,394.24 L172.0,391.95 L173.5,391.12 L175.0,389.03 L176.5,387.79 L178.0,386.84 L179.5,384.79 L181.0,383.36 L182.5,382.36 L184.0,380.63 L185.5,378.87 L187.0,378.27 L188.5,376.06 L190.0,374.50 L191.5,373.32 L193.0,372.11 L194.5,370.77 L196.0,368.75 L197.5,367.50 L199.0,365.77 L200.5,364.69 L202.0,363.52 L203.5,362.04 L205.0,360.73 L206.5,359.15 L208.0,357.79 L209.5,356.30 L211.0,355.48 L212.5,354.64 L214.0,354.41 L215.5,353.48 L217.0,352.67 L218.5,352.65 L220.0,353.04 L221.5,352.36 L223.0,352.78 L224.5,352.60 L226.0,352.71 L227.5,352.38 L229.0,353.11 L230.5,352.48 L232.0,352.79 L233.5,352.62 L235.0,352.26 L236.5,352.75 L238.0,352.37 L239.5,352.30 L241.0,352.28 L242.5,352.39 L244.0,352.33 L245.5,352.82 L247.0,352.70 L248.5,353.13 L250.0,353.08 L251.5,353.14 L253.0,352.45 L254.5,352.64 L256.0,352.47 L257.5,352.77 L259.0,352.80 L260.5,352.96 L262.0,352.88 L263.5,352.47 L265.0,352.62 L266.5,352.71 L268.0,352.24 L269.5,352.27 L271.0,352.61 L272.5,352.34 L274.0,352.89 L275.5,352.46 L277.0,352.33 L278.5,352.40 L280.0,352.45 L281.5,352.43 L283.0,352.71 L284.5,352.65 L286.0,352.52 L287.5,352.81 L289.0,352.43 L290.5,353.05 L292.0,353.10 L293.5,352.89 L295.0,352.62 L296.5,352.69 L298.0,352.76 L299.5,352.28 L301.0,352.61 L302.5,352.71 L304.0,352.40 L305.5,352.32 L307.0,352.95 L308.5,352.56 L310.0,352.70 L311.5,353.06 L313.0,352.78 L314.5,352.49 L316.0,353.12 L317.5,352.56 L319.0,352.25 L320.5,352.85 L322.0,352.32 L323.5,352.50 L325.0,352.99 L326.5,352.83 L328.0,352.24 L329.5,352.63 L331.0,352.60 L332.5,352.66 L334.0,352.41 L335.5,352.76 L337.0,352.29 L338.5,352.48 L340.0,352.56 L341.5,353.07 L343.0,352.29 L344.5,352.90 L346.0,352.40 L347.5,352.74 L349.0,352.58 L350.5,352.64 L352.0,352.90 L353.5,352.58 L355.0,352.33 L356.5,352.33 L358.0,352.29 L359.5,352.99 L361.0,352.80 L362.5,353.08 L364.0,352.84 L365.5,352.24 L367.0,352.81 L368.5,352.92 L370.0,352.87 L371.5,352.67 L373.0,352.54 L374.5,352.63 L376.0,352.94 L377.5,352.46 L379.0,352.69 L380.5,352.65 L382.0,353.08 L383.5,352.94 L385.0,353.06 L386.5,352.97 L388.0,352.48 L389.5,352.42 L391.0,352.66 L392.5,352.45 L394.0,352.60 L395.5,352.83 L397.0,353.04 L398.5,352.74 L400.0,352.95 L401.5,352.30 L403.0,352.53 L404.5,353.11 L406.0,352.34 L407.5,352.59 L409.0,352.27 L410.5,352.29 L412.0,353.02 L413.5,353.10 L415.0,352.79 L416.5,352.33 L418.0,352.48 L419.5,352.42 L421.0,352.81 L422.5,352.82 L424.0,352.60 L425.5,352.68 L427.0,352.31 L428.5,352.69 L430.0,353.06 L431.5,352.89 L433.0,352.29 L434.5,352.67 L436.0,352.85 L437.5,352.44 L439.0,353.01 L440.5,352.62 L442.0,352.84 L443.5,352.57 L445.0,353.10 L446.5,352.91 L448.0,352.72 L449.5,352.33 L451.0,352.60 L452.5,352.23 L454.0,352.74 L455.5,353.00 L457.0,352.36 L458.5,352.66 L460.0,352.64 L461.5,352.57 L463.0,352.84 L464.5,353.04 L466.0,352.83 L467.5,352.63 L469.0,353.07 L470.5,352.50 L472.0,352.87 L473.5,352.79 L475.0,352.88 L476.5,352.96 L478.0,352.40 L479.5,352.76 L481.0,352.56 L482.5,352.80 L484.0,353.08 L485.5,352.77 L487.0,352.21 L488.5,352.61 L490.0,352.84 L491.5,352.99 L493.0,352.78 L494.5,352.93 L496.0,352.21 L497.5,353.04 L499.0,352.85 L500.5,352.74 L502.0,353.01 L503.5,352.99 L505.0,352.28 L506.5,352.93 L508.0,352.88 L509.5,352.37 L511.0,352.86 L512.5,352.72 L514.0,352.36 L515.5,352.91 L517.0,352.31 L518.5,352.74 L520.0,352.58 L521.5,352.42 L523.0,352.70 L524.5,352.61 L526.0,352.37 L527.5,353.06 L529.0,352.25 L530.5,352.19 L532.0,352.62 L533.5,352.94 L535.0,352.78 L536.5,352.87 L538.0,352.62 L539.5,352.79 L541.0,352.49 L542.5,352.43 L544.0,352.64 L545.5,352.21 L547.0,352.26 L548.5,352.86 L550.0,352.34 L551.5,352.86 L553.0,352.89 L554.5,352.55 L556.0,352.79 L557.5,352.89 L559.0,352.96 L560.5,352.30 L562.0,352.33 L563.5,352.52 L565.0,352.60 L566.5,352.45 L568.0,352.19 L569.5,352.68 L571.0,353.05 L572.5,352.51 L574.0,352.66 L575.5,352.52 L577.0,352.58 L578.5,352.96 L580.0,352.45 L581.5,352.76 L583.0,352.61 L584.5,352.66 L586.0,353.00 L587.5,352.24 L589.0,352.92 L590.5,352.45 L592.0,352.76 L593.5,352.89 L595.0,352.76 L596.5,352.53 L598.0,352.93 L599.5,352.26 L601.0,352.74 L602.5,352.52 L604.0,352.65 L605.5,352.94 L607.0,352.89 L608.5,352.74 L610.0,352.45 L611.5,352.38 L613.0,352.58 L614.5,352.38 L616.0,352.42 L617.5,353.03 L619.0,352.27 L620.5,352.91 L622.0,352.51 L623.5,352.50 L625.0,352.45 L626.5,352.24 L628.0,352.58 L629.5,352.32 L631.0,352.56 L632.5,352.43 L634.0,352.97 L635.5,353.00 L637.0,352.56 L638.5,352.74 L640.0,353.00 L641.5,352.46 L643.0,352.25 L644.5,352.38 L646.0,352.33 L647.5,352.77 L649.0,352.50 L650.5,352.48 L652.0,352.88 L653.5,352.37 L655.0,352.89 L656.5,352.73 L658.0,352.52 L659.5,352.90 L661.0,352.47 L662.5,352.95 L664.0,352.99 L665.5,352.61 L667.0,352.78 L668.5,353.01 L670.0,352.83 L671.5,352.83 L673.0,352.94 L674.5,353.00 L676.0,352.84 L677.5,353.04 L679.0,352.42 L680.5,352.72 L682.0,352.76 L683.5,352.49 L685.0,352.51 L686.5,352.31 L688.0,353.02 L689.5,352.47 L691.0,352.58 L692.5,352.96 L694.0,352.32 L695.5,353.02 L697.0,352.27 L698.5,352.18 L700.0,352.47 L701.5,352.48 L703.0,352.98 L704.5,352.95 L706.0,352.84 L707.5,352.54 L709.0,352.64 L710.5,352.36 L712.0,352.90 L713.5,352.50 L715.0,352.41 L716.5,352.72 L718.0,352.29 L719.5,352.43 L721.0,352.98 L722.5,352.23 L724.0,352.28 L725.5,352.33 L727.0,352.37 L728.5,352.53 L730.0,352.37 L731.5,352.46 L733.0,352.37 L734.5,352.36 L736.0,352.70 L737.5,352.45 L739.0,352.48 L740.5,352.84 L742.0,352.20 L743.5,352.27 L745.0,352.91 L746.5,352.53 L748.0,352.84 L749.5,352.26 L751.0,352.61 L752.5,352.90 L754.0,352.45 L755.5,352.83 L757.0,352.69 L758.5,352.50 L760.0,353.04 L761.5,352.49 L763.0,352.57 L764.5,352.70 L766.0,352.43 L767.5,352.89 L769.0,352.68 L770.5,352.67 L772.0,352.62 L773.5,353.02 L775.0,353.03 L776.5,352.89 L778.0,352.55 L779.5,352.51 L781.0,352.61 L782.5,352.18 L784.0,352.23 L785.5,353.03 L787.0,352.25 L788.5,352.98 L790.0,352.75 L791.5,352.96 L793.0,352.20 L794.5,352.41 L796.0,352.85 L797.5,352.14 L799.0,352.23 L800.5,352.45 L802.0,352.29 L803.5,352.26 L805.0,352.73 L806.5,352.21 L808.0,353.01 L809.5,352.72 L811.0,352.18 L812.5,352.94 L814.0,352.35 L815.5,352.56 L817.0,352.63 L818.5,352.25 L820.0,352.58 L821.5,352.18 L823.0,352.31 L824.5,352.95 L826.0,352.87 L827.5,352.60 L829.0,352.74 L830.5,352.91 L832.0,352.25 L833.5,352.57 L835.0,352.24 L836.5,352.23 L838.0,352.22 L839.5,352.32 L841.0,352.17 L842.5,352.32 L844.0,352.47 L845.5,352.68 L847.0,352.90 L848.5,352.94 L850.0,352.77 L851.5,352.58 L853.0,352.95 L854.5,352.27 L856.0,352.22 L857.5,352.86 L859.0,352.69 L860.5,352.31 L862.0,352.46 L863.5,352.39 L865.0,352.51 L866.5,352.50 L868.0,352.48 L869.5,352.84 L871.0,352.85 L872.5,352.62 L874.0,352.54 L875.5,352.37 L877.0,352.81 L878.5,353.01 L880.0,352.32 L881.5,352.75 L883.0,352.75 L884.5,352.71 L886.0,352.14 L887.5,352.61 L889.0,352.30 L890.5,352.29 L892.0,352.64 L893.5,352.69 L895.0,352.68 L896.5,352.78 L898.0,352.75 L899.5,352.54 L901.0,352.16 L902.5,352.81 L904.0,352.85 L905.5,352.86 L907.0,352.65 L908.5,352.15 L910.0,352.29 L911.5,352.21 L913.0,352.68 L914.5,352.60 L916.0,352.28 L917.5,352.97 L919.0,352.99 L920.5,352.92 L922.0,352.53 L923.5,352.37 L925.0,352.30 L926.5,352.85 L928.0,352.74 L929.5,352.36 L931.0,352.92 L932.5,352.62 L934.0,352.48 L935.5,352.48 L937.0,352.75 L938.5,352.52 L940.0,352.70 L941.5,352.21 L943.0,352.74 L944.5,352.35 L946.0,352.92 L947.5,352.30 L949.0,352.40 L950.5,352.59 L952.0,352.46 L953.5,352.58 L955.0,352.93 L956.5,352.28 L958.0,352.80 L959.5,352.72 L961.0,352.81 L962.5,352.50 L964.0,352.51 L965.5,352.41 L967.0,352.53 L968.5,352.33 L970.0,352.27 L971.5,352.53 L973.0,352.27 L974.5,352.52 L976.0,352.61 L977.5,352.38 L979.0,352.25 L980.5,352.64 L982.0,352.87 L983.5,352.30 L985.0,352.65 L986.5,352.69 L988.0,352.89 L989.5,352.71 L991.0,352.37 L992.5,352.28 L994.0,352.85 L995.5,352.36 L997.0,352.10 L998.5,352.88 L1000.0,352.27 L1001.5,352.37 L1003.0,352.38 L1004.5,352.32 L1006.0,352.74 L1007.5,352.40 L1009.0,352.49 L1010.5,352.47 L1012.0,352.84 L1013.5,352.11 L1015.0,352.61 L1016.5,352.21 L1018.0,352.22 L1019.5,352.64 L1021.0,352.43 L1022.5,352.15 L1024.0,352.62 L1025.5,352.91 L1027.0,352.67 L1028.5,352.53 L1030.0,352.81 L1031.5,352.91 L1033.0,352.22 L1034.5,352.36 L1036.0,352.95 L1037.5,352.92 L1039.0,352.27 L1040.5,352.72 L1042.0,352.87 L1043.5,352.62 L1045.0,352.72 L1046.5,352.56 L1048.0,352.29 L1049.5,352.27 L1051.0,352.14 L1052.5,352.68 L1054.0,352.21 L1055.5,352.64 L1057.0,352.43 L1058.5,352.47 L1060.0,352.95 L1061.5,352.43 L1063.0,352.51 L1064.5,352.42 L1066.0,352.27 L1067.5,352.28 L1069.0,352.56 L1070.5,352.81 L1072.0,352.16 L1073.5,352.93 L1075.0,352.68 L1076.5,352.13 L1078.0,352.71 L1079.5,352.44 L1081.0,352.54 L1082.5,352.17 L1084.0,352.54 L1085.5,352.54 L1087.0,352.78 L1088.5,352.60 L1090.0,352.71 L1091.5,352.74 L1093.0,352.27 L1094.5,352.10 L1096.0,352.50 L1097.5,352.19 L1099.0,352.20 L1100.5,352.36 L1102.0,352.56 L1103.5,352.63 L1105.0,352.65 L1106.5,352.92 L1108.0,352.16 L1109.5,352.57 L1111.0,352.15 L1112.5,352.67 L1114.0,352.46 L1115.5,352.20 L1117.0,352.35 L1118.5,352.66 L1120.0,352.49 L1121.5,352.92 L1123.0,352.39 L1124.5,352.37 L1126.0,352.90 L1127.5,352.61 L1129.0,352.16 L1130.5,352.77 L1132.0,352.39 L1133.5,352.92 L1135.0,352.64 L1136.5,352.79 L1138.0,352.87 L1139.5,352.52 L1141.0,352.94 L1142.5,352.09 L1144.0,352.37 L1145.5,352.82 L1147.0,352.07 L1148.5,352.67 L1150.0,352.96 L1151.5,352.71 L1153.0,352.84 L1154.5,352.13 L1156.0,352.55 L1157.5,352.61 L1159.0,352.45 L1160.5,352.44 L1162.0,352.77 L1163.5,352.21 L1165.0,352.10 L1166.5,352.59 L1168.0,352.93 L1169.5,352.80 L1171.0,352.66 L1172.5,352.32 L1174.0,352.87 L1175.5,352.09 L1177.0,352.28 L1178.5,352.77 L1180.0,352.86 L1181.5,352.42 L1183.0,352.87 L1184.5,352.16 L1186.0,352.59 L1187.5,352.12 L1189.0,352.26 L1190.5,352.23 L1192.0,352.06 L1193.5,352.42 L1195.0,352.50 L1196.5,352.31 L1198.0,352.64 L1199.5,352.10 L1201.0,352.52 L1202.5,352.53 L1204.0,352.41 L1205.5,352.87 L1207.0,352.17 L1208.5,352.44 L1210.0,352.46 L1211.5,352.39 L1213.0,352.93 L1214.5,352.56 L1216.0,352.51 L1217.5,352.45 L1219.0,352.44 L1220.5,352.90 L1222.0,352.77 L1223.5,352.63 L1225.0,352.19 L1226.5,352.58 L1228.0,352.16 L1229.5,352.36 L1231.0,352.07 L1232.5,352.68 L1234.0,352.93 L1235.5,352.62 L1237.0,352.56 L1238.5,352.27 L1240.0,352.44 L1241.5,352.46 L1243.0,352.42 L1244.5,352.29 L1246.0,352.24 L1247.5,352.72 L1249.0,352.90 L1250.5,352.78 L1252.0,352.60 L1253.5,352.07 L1255.0,352.31 L1256.5,352.80 L1258.0,352.92 L1259.5,352.53 L1261.0,352.55 L1262.5,352.66 L1264.0,352.26 L1265.5,352.68 L1267.0,352.37 L1268.5,352.80 L1270.0,352.45 L1271.5,352.64 L1273.0,352.54 L1274.5,352.52 L1276.0,352.45 L1277.5,352.89 L1279.0,352.72 L1280.5,352.41 L1282.0,352.49 L1283.5,352.84 L1285.0,352.71 L1286.5,352.62 L1288.0,352.90 L1289.5,352.14 L1291.0,352.57 L1292.5,352.60 L1294.0,352.44 L1295.5,352.90 L1297.0,352.90 L1298.5,352.38 L1300.0,352.59 L1301.5,352.72 L1303.0,352.66 L1304.5,352.36 L1306.0,352.75 L1307.5,352.34 L1309.0,352.16 L1310.5,352.63 L1312.0,352.61 L1313.5,352.40 L1315.0,352.48 L1316.5,352.92 L1318.0,352.76 L1319.5,352.39 L1321.0,352.85 L1322.5,352.54 L1324.0,352.39 L1325.5,352.61 L1327.0,352.73 L1328.5,352.83 L1330.0,352.63 L1331.5,352.63 L1333.0,352.39 L1334.5,352.06 L1336.0,352.43 L1337.5,352.13 L1339.0,352.87 L1340.5,352.35 L1342.0,352.57 L1343.5,352.68 L1345.0,352.18 L1346.5,352.77 L1348.0,352.32 L1349.5,352.10 L1351.0,352.56 L1352.5,352.38 L1354.0,352.85 L1355.5,352.42 L1357.0,352.11 L1358.5,352.04 L1360.0,352.05 L1361.5,352.46 L1363.0,352.66 L1364.5,352.07 L1366.0,352.32 L1367.5,352.45 L1369.0,352.83 L1370.5,352.89 L1372.0,352.81 L1373.5,352.59 L1375.0,352.54 L1376.5,352.22 L1378.0,352.57 L1379.5,352.17 L1381.0,352.29 L1382.5,352.76 L1384.0,352.53 L1385.5,352.67 L1387.0,352.43 L1388.5,352.27 L1390.0,352.47 L1391.5,352.53 L1393.0,352.23 L1394.5,352.77 L1396.0,352.90 L1397.5,352.18 L1399.0,352.23 L1400.5,352.74 L1402.0,352.66 L1403.5,352.21 L1405.0,352.54 L1406.5,352.23 L1408.0,352.79 L1409.5,352.54 L1411.0,352.47 L1412.5,352.16 L1414.0,352.37 L1415.5,352.44 L1417.0,352.33 L1418.5,352.17 L1420.0,352.19 L1421.5,352.64 L1423.0,352.84 L1424.5,352.77 L1426.0,352.56 L1427.5,352.72 L1429.0,352.13 L1430.5,352.20 L1432.0,352.64 L1433.5,352.01 L1435.0,352.08 L1436.5,352.71 L1438.0,352.18 L1439.5,352.17 L1441.0,352.36 L1442.5,352.76 L1444.0,352.01 L1445.5,352.79 L1447.0,352.28 L1448.5,352.52 L1450.0,352.43 L1451.5,352.11 L1453.0,352.86 L1454.5,352.16 L1456.0,352.73 L1457.5,352.79 L1459.0,352.41 L1460.5,352.86 L1462.0,352.06 L1463.5,352.13 L1465.0,352.43 L1466.5,352.07 L1468.0,352.73 L1469.5,352.47 L1471.0,352.72 L1472.5,352.26 L1474.0,352.02 L1475.5,352.80 L1477.0,352.18 L1478.5,352.37 L1480.0,352.11 L1481.5,352.52 L1483.0,352.41 L1484.5,352.17 L1486.0,352.03 L1487.5,352.30 L1489.0,352.70 L1490.5,352.13 L1492.0,352.20 L1493.5,352.55 L1495.0,352.56 L1496.5,352.72 L1498.0,352.57 L1499.5,352.76 L1501.0,352.13 L1502.5,352.82 L1504.0,352.02 L1505.5,352.10 L1507.0,352.08 L1508.5,352.69 L1510.0,352.44 L1511.5,352.82 L1513.0,352.87 L1514.5,352.85 L1516.0,352.54 L1517.5,352.31 L1519.0,352.85 L1520.5,352.65 L1522.0,352.16 L1523.5,352.49 L1525.0,352.01 L1526.5,352.00 L1528.0,352.56 L1529.5,352.63 L1531.0,352.76 L1532.5,352.66 L1534.0,352.11 L1535.5,352.65 L1537.0,352.87 L1538.5,352.59 L1540.0,352.42 L1541.5,352.25 L1543.0,352.04 L1544.5,352.55 L1546.0,352.85 L1547.5,352.09 L1549.0,352.72 L1550.5,352.79 L1552.0,352.30 L1553.5,352.74 L1555.0,352.12 L1556.5,352.25 L1558.0,352.49 L1559.5,352.77 L1561.0,352.46 L1562.5,352.06 L1564.0,352.82 L1565.5,352.49 L1567.0,352.68 L1568.5,352.19 L1570.0,352.28 L1571.5,352.06 L1573.0,352.15 L1574.5,352.37 L1576.0,352.35 L1577.5,352.57 L1579.0,352.73 L1580.5,352.28 L1582.0,352.81 L1583.5,352.56 L1585.0,352.29 L1586.5,352.14 L1588.0,352.84 L1589.5,352.57 L1591.0,352.01 L1592.5,352.59 L1594.0,352.31 L1595.5,352.35 L1597.0,352.66 L1598.5,352.17 L1600.0,352.21 L1601.5,352.46 L1603.0,352.79 L1604.5,352.05 L1606.0,352.72 L1607.5,352.62 L1609.0,352.13 L1610.5,352.57 L1612.0,352.53 L1613.5,352.61 L1615.0,352.45 L1616.5,352.25 L1618.0,352.42 L1619.5,352.18 L1621.0,352.38 L1622.5,352.33 L1624.0,352.06 L1625.5,352.18 L1627.0,352.28 L1628.5,352.32 L1630.0,352.47 L1631.5,352.64 L1633.0,352.20 L1634.5,352.46 L1636.0,352.27 L1637.5,352.17 L1639.0,352.09 L1640.5,352.83 L1642.0,352.80 L1643.5,352.71 L1645.0,352.12 L1646.5,352.10 L1648.0,352.06 L1649.5,352.23 L1651.0,352.35 L1652.5,351.97 L1654.0,352.34 L1655.5,352.58 L1657.0,352.71 L1658.5,352.13 L1660.0,351.96 L1661.5,352.68 L1663.0,352.30 L1664.5,352.24 L1666.0,352.10 L1667.5,352.20 L1669.0,352.20 L1670.5,352.19 L1672.0,352.17 L1673.5,352.42 L1675.0,352.69 L1676.5,352.24 L1678.0,352.33 L1679.5,352.39 L1681.0,352.71 L1682.5,352.65 L1684.0,352.84 L1685.5,352.11 L1687.0,352.68 L1688.5,352.22 L1690.0,352.47 L1691.5,352.43 L1693.0,352.47 L1694.5,352.24 L1696.0,352.02 L1697.5,351.96 L1699.0,352.79 L1700.5,352.75 L1702.0,352.37 L1703.5,352.03 L1705.0,352.71 L1706.5,352.40 L1708.0,352.37 L1709.5,352.53 L1711.0,352.09" fill="none" stroke="#1ec6d2" stroke-width="2.2"/><line x1="13" y1="622.5" x2="1711" y2="622.5" stroke="#e8405a" stroke-width="1.7"/><path d="M202.1,622h0.9M208.6,622h0.9M230.5,622h0.9M202.9,622h0.9M205.5,622h0.9M210.2,622h0.9M186.1,622h0.9M205.7,622h0.9M212.8,622h0.9M222.6,622h0.9M370.2,622h0.9M381.7,622h0.9M370.0,622h0.9M409.5,622h0.9M403.1,622h0.9M367.3,622h0.9M419.0,622h0.9M418.1,622h0.9M401.0,622h0.9M398.9,622h0.9M373.7,622h0.9M365.8,622h0.9M541.1,622h0.9M522.4,622h0.9M527.6,622h0.9M1009.7,622h0.9M1001.2,622h0.9M1123.2,622h0.9M1122.0,622h0.9M1142.1,622h0.9M1240.4,622h0.9M1242.8,622h0.9M1430.0,622h0.9M1433.2,622h0.9M1629.1,622h0.9" stroke="#e8405a" stroke-width="2.2" fill="none"/><path d="M13.0,770.18 L14.2,769.97 L15.4,770.43 L16.6,770.05 L17.8,769.91 L19.0,770.44 L20.2,771.27 L21.4,771.08 L22.6,771.03 L23.8,770.16 L25.0,770.66 L26.2,770.25 L27.4,770.08 L28.6,769.97 L29.8,770.15 L31.0,771.29 L32.2,771.13 L33.4,771.10 L34.6,771.09 L35.8,770.11 L37.0,770.30 L38.2,770.81 L39.4,770.98 L40.6,771.17 L41.8,771.21 L43.0,769.95 L44.2,770.78 L45.4,770.88 L46.6,770.62 L47.8,770.09 L49.0,770.57 L50.2,769.95 L51.4,771.30 L52.6,771.19 L53.8,770.69 L55.0,770.29 L56.2,771.26 L57.4,770.73 L58.6,771.22 L59.8,771.17 L61.0,770.62 L62.2,770.47 L63.4,770.77 L64.6,770.50 L65.8,770.07 L67.0,770.30 L68.2,771.11 L69.4,769.88 L70.6,769.89 L71.8,770.82 L73.0,770.26 L74.2,770.67 L75.4,770.57 L76.6,770.36 L77.8,771.41 L79.0,770.13 L80.2,770.48 L81.4,770.14 L82.6,770.83 L83.8,770.26 L85.0,770.39 L86.2,771.01 L87.4,770.33 L88.6,770.71 L89.8,771.26 L91.0,769.98 L92.2,769.92 L93.4,770.18 L94.6,771.04 L95.8,770.80 L97.0,770.20 L98.2,770.35 L99.4,770.10 L100.6,770.55 L101.8,769.89 L103.0,770.94 L104.2,771.25 L105.4,771.35 L106.6,771.00 L107.8,771.36 L109.0,769.85 L110.2,770.28 L111.4,771.37 L112.6,771.06 L113.8,770.48 L115.0,771.33 L116.2,770.82 L117.4,771.13 L118.6,770.29 L119.8,770.13 L121.0,770.54 L122.2,770.04 L123.4,770.44 L124.6,771.36 L125.8,770.36 L127.0,769.84 L128.2,769.90 L129.4,770.10 L130.6,771.08 L131.8,770.41 L133.0,770.29 L134.2,769.98 L135.4,771.40 L136.6,770.51 L137.8,770.16 L139.0,769.92 L140.2,769.92 L141.4,770.10 L142.6,770.91 L143.8,770.07 L145.0,769.90 L146.2,770.62 L147.4,770.23 L148.6,771.43 L149.8,770.03 L151.0,770.68 L152.2,771.07 L153.4,770.49 L154.6,771.41 L155.8,770.60 L157.0,770.22 L158.2,770.49 L159.4,769.89 L160.6,770.51 L161.8,770.23 L163.0,771.26 L164.2,771.16 L165.4,770.63 L166.6,769.89 L167.8,770.24 L169.0,770.22 L170.2,770.17 L171.4,770.21 L172.6,771.23 L173.8,770.06 L175.0,769.92 L176.2,771.32 L177.4,770.74 L178.6,771.42 L179.8,770.48 L181.0,771.28 L182.2,770.88 L183.4,771.10 L184.6,771.03 L185.8,770.63 L187.0,769.99 L188.2,770.18 L189.4,771.24 L190.6,771.28 L191.8,771.32 L193.0,770.38 L194.2,770.89 L195.4,771.12 L196.6,770.87 L197.8,771.15 L199.0,770.69 L200.2,770.89 L201.4,770.94 L202.6,770.27 L203.8,771.32 L205.0,771.37 L206.2,769.96 L207.4,771.40 L208.6,771.38 L209.8,770.91 L211.0,769.92 L212.2,771.28 L213.4,770.05 L214.6,771.40 L215.8,770.91 L217.0,769.94 L218.2,770.11 L219.4,770.86 L220.6,770.76 L221.8,771.04 L223.0,771.33 L224.2,770.20 L225.4,769.85 L226.6,771.32 L227.8,769.87 L229.0,771.25 L230.2,770.03 L231.4,771.15 L232.6,771.10 L233.8,771.25 L235.0,770.73 L236.2,771.26 L237.4,770.17 L238.6,770.93 L239.8,770.38 L241.0,771.28 L242.2,771.09 L243.4,770.61 L244.6,770.69 L245.8,769.89 L247.0,769.91 L248.2,770.80 L249.4,770.64 L250.6,771.24 L251.8,770.83 L253.0,770.08 L254.2,770.43 L255.4,771.08 L256.6,770.69 L257.8,769.87 L259.0,771.20 L260.2,771.18 L261.4,769.99 L262.6,770.73 L263.8,770.47 L265.0,771.12 L266.2,770.36 L267.4,770.23 L268.6,770.64 L269.8,771.40 L271.0,770.01 L272.2,770.04 L273.4,770.85 L274.6,771.28 L275.8,770.68 L277.0,770.55 L278.2,771.23 L279.4,771.10 L280.6,769.97 L281.8,771.27 L283.0,770.17 L284.2,770.34 L285.4,771.20 L286.6,770.54 L287.8,771.14 L289.0,770.13 L290.2,771.26 L291.4,770.15 L292.6,770.10 L293.8,770.65 L295.0,770.41 L296.2,770.73 L297.4,771.31 L298.6,771.00 L299.8,769.87 L301.0,770.36 L302.2,770.74 L303.4,770.64 L304.6,771.01 L305.8,770.64 L307.0,769.99 L308.2,770.26 L309.4,771.22 L310.6,770.44 L311.8,771.09 L313.0,771.45 L314.2,770.87 L315.4,770.95 L316.6,770.84 L317.8,770.37 L319.0,771.33 L320.2,770.62 L321.4,771.33 L322.6,770.36 L323.8,771.26 L325.0,771.13 L326.2,770.85 L327.4,770.58 L328.6,770.10 L329.8,771.11 L331.0,770.45 L332.2,770.93 L333.4,770.09 L334.6,770.00 L335.8,770.10 L337.0,771.17 L338.2,770.16 L339.4,771.32 L340.6,770.47 L341.8,770.80 L343.0,770.44 L344.2,770.87 L345.4,770.02 L346.6,770.52 L347.8,771.37 L349.0,770.16 L350.2,770.92 L351.4,770.40 L352.6,770.36 L353.8,769.91 L355.0,769.91 L356.2,771.40 L357.4,771.21 L358.6,771.16 L359.8,771.17 L361.0,771.40 L362.2,770.13 L363.4,770.81 L364.6,770.67 L365.8,770.80 L367.0,771.38 L368.2,771.10 L369.4,771.43 L370.6,770.07 L371.8,770.92 L373.0,770.96 L374.2,771.07 L375.4,770.87 L376.6,771.21 L377.8,770.37 L379.0,771.37 L380.2,770.53 L381.4,770.84 L382.6,771.32 L383.8,771.01 L385.0,770.38 L386.2,770.25 L387.4,770.41 L388.6,770.89 L389.8,771.48 L391.0,771.32 L392.2,770.53 L393.4,770.53 L394.6,771.19 L395.8,770.34 L397.0,770.55 L398.2,769.91 L399.4,770.18 L400.6,770.75 L401.8,771.00 L403.0,770.87 L404.2,770.47 L405.4,771.41 L406.6,770.89 L407.8,770.14 L409.0,770.00 L410.2,771.45 L411.4,771.47 L412.6,771.36 L413.8,770.86 L415.0,770.39 L416.2,770.04 L417.4,770.30 L418.6,770.25 L419.8,771.38 L421.0,771.32 L422.2,771.14 L423.4,770.13 L424.6,770.27 L425.8,770.37 L427.0,771.41 L428.2,770.16 L429.4,771.16 L430.6,770.98 L431.8,770.77 L433.0,771.43 L434.2,770.31 L435.4,770.73 L436.6,770.15 L437.8,770.05 L439.0,769.95 L440.2,770.40 L441.4,770.09 L442.6,770.00 L443.8,771.49 L445.0,770.36 L446.2,771.32 L447.4,771.02 L448.6,771.07 L449.8,770.95 L451.0,771.42 L452.2,771.30 L453.4,771.05 L454.6,770.80 L455.8,771.01 L457.0,771.06 L458.2,770.78 L459.4,770.70 L460.6,770.15 L461.8,771.25 L463.0,770.68 L464.2,770.01 L465.4,770.17 L466.6,771.30 L467.8,770.31 L469.0,770.53 L470.2,770.99 L471.4,771.28 L472.6,770.43 L473.8,770.52 L475.0,770.58 L476.2,769.95 L477.4,771.31 L478.6,769.94 L479.8,771.44 L481.0,770.15 L482.2,770.16 L483.4,771.26 L484.6,771.22 L485.8,770.28 L487.0,770.79 L488.2,770.67 L489.4,771.06 L490.6,770.20 L491.8,771.23 L493.0,771.50 L494.2,771.04 L495.4,771.38 L496.6,771.41 L497.8,770.52 L499.0,771.27 L500.2,771.24 L501.4,770.85 L502.6,770.08 L503.8,770.90 L505.0,771.37 L506.2,770.40 L507.4,770.95 L508.6,771.35 L509.8,770.87 L511.0,769.97 L512.2,770.92 L513.4,770.32 L514.6,771.29 L515.8,770.97 L517.0,770.41 L518.2,771.35 L519.4,770.91 L520.6,770.46 L521.8,771.25 L523.0,771.34 L524.2,771.34 L525.4,771.33 L526.6,770.97 L527.8,771.03 L529.0,770.88 L530.2,770.76 L531.4,771.50 L532.6,770.48 L533.8,770.05 L535.0,771.06 L536.2,770.72 L537.4,770.79 L538.6,770.88 L539.8,770.32 L541.0,770.24 L542.2,770.03 L543.4,771.17 L544.6,771.37 L545.8,771.04 L547.0,770.11 L548.2,771.49 L549.4,771.24 L550.6,770.74 L551.8,769.92 L553.0,771.27 L554.2,770.92 L555.4,770.92 L556.6,769.95 L557.8,771.10 L559.0,769.98 L560.2,770.69 L561.4,770.16 L562.6,770.50 L563.8,771.35 L565.0,771.12 L566.2,771.23 L567.4,770.40 L568.6,770.55 L569.8,770.89 L571.0,769.98 L572.2,770.59 L573.4,771.49 L574.6,771.13 L575.8,771.31 L577.0,770.41 L578.2,771.03 L579.4,771.19 L580.6,771.06 L581.8,770.63 L583.0,770.21 L584.2,769.96 L585.4,771.35 L586.6,771.42 L587.8,770.37 L589.0,771.14 L590.2,770.58 L591.4,770.93 L592.6,771.28 L593.8,770.45 L595.0,770.92 L596.2,770.34 L597.4,770.75 L598.6,769.98 L599.8,770.35 L601.0,770.39 L602.2,771.40 L603.4,770.15 L604.6,771.15 L605.8,770.07 L607.0,771.51 L608.2,770.20 L609.4,770.08 L610.6,770.27 L611.8,771.43 L613.0,771.01 L614.2,771.36 L615.4,770.73 L616.6,770.12 L617.8,770.48 L619.0,770.67 L620.2,771.52 L621.4,770.20 L622.6,770.33 L623.8,771.29 L625.0,770.12 L626.2,771.49 L627.4,770.41 L628.6,770.85 L629.8,771.00 L631.0,771.39 L632.2,770.06 L633.4,771.30 L634.6,770.23 L635.8,771.09 L637.0,769.98 L638.2,771.17 L639.4,770.23 L640.6,770.27 L641.8,770.00 L643.0,770.46 L644.2,770.47 L645.4,771.52 L646.6,770.91 L647.8,770.53 L649.0,771.53 L650.2,770.22 L651.4,770.29 L652.6,771.47 L653.8,771.47 L655.0,771.04 L656.2,771.51 L657.4,770.04 L658.6,771.39 L659.8,771.07 L661.0,771.02 L662.2,771.30 L663.4,770.11 L664.6,770.27 L665.8,770.17 L667.0,770.71 L668.2,770.82 L669.4,770.81 L670.6,770.53 L671.8,771.14 L673.0,771.29 L674.2,771.16 L675.4,770.01 L676.6,770.19 L677.8,770.30 L679.0,770.33 L680.2,770.87 L681.4,770.26 L682.6,770.95 L683.8,770.50 L685.0,770.53 L686.2,771.09 L687.4,771.46 L688.6,770.26 L689.8,770.51 L691.0,771.52 L692.2,770.29 L693.4,770.00 L694.6,770.26 L695.8,771.27 L697.0,771.12 L698.2,771.46 L699.4,770.75 L700.6,770.02 L701.8,770.45 L703.0,771.11 L704.2,770.58 L705.4,770.18 L706.6,770.56 L707.8,770.70 L709.0,770.53 L710.2,770.67 L711.4,770.18 L712.6,770.01 L713.8,771.21 L715.0,771.13 L716.2,770.63 L717.4,770.14 L718.6,770.43 L719.8,770.85 L721.0,771.39 L722.2,770.73 L723.4,771.52 L724.6,770.80 L725.8,770.25 L727.0,770.95 L728.2,770.92 L729.4,770.92 L730.6,771.12 L731.8,770.00 L733.0,770.66 L734.2,771.24 L735.4,770.18 L736.6,770.03 L737.8,770.26 L739.0,770.42 L740.2,770.66 L741.4,770.47 L742.6,770.98 L743.8,770.24 L745.0,770.52 L746.2,771.05 L747.4,770.84 L748.6,771.50 L749.8,771.46 L751.0,770.38 L752.2,770.50 L753.4,770.83 L754.6,770.84 L755.8,770.55 L757.0,771.35 L758.2,770.28 L759.4,770.72 L760.6,770.16 L761.8,771.38 L763.0,770.92 L764.2,771.55 L765.4,770.20 L766.6,771.11 L767.8,770.93 L769.0,770.05 L770.2,771.28 L771.4,771.37 L772.6,770.10 L773.8,771.48 L775.0,771.23 L776.2,770.94 L777.4,770.84 L778.6,770.39 L779.8,770.06 L781.0,770.73 L782.2,771.36 L783.4,770.31 L784.6,770.73 L785.8,770.43 L787.0,771.08 L788.2,771.51 L789.4,771.40 L790.6,770.44 L791.8,770.64 L793.0,769.98 L794.2,770.82 L795.4,771.34 L796.6,771.33 L797.8,770.09 L799.0,770.67 L800.2,770.11 L801.4,770.66 L802.6,771.44 L803.8,770.43 L805.0,771.33 L806.2,771.51 L807.4,771.29 L808.6,770.30 L809.8,771.45 L811.0,771.46 L812.2,771.58 L813.4,770.00 L814.6,769.99 L815.8,770.45 L817.0,770.81 L818.2,770.66 L819.4,770.13 L820.6,771.01 L821.8,771.05 L823.0,770.99 L824.2,770.80 L825.4,770.86 L826.6,771.09 L827.8,770.09 L829.0,770.68 L830.2,770.20 L831.4,770.15 L832.6,771.20 L833.8,770.50 L835.0,770.53 L836.2,770.43 L837.4,770.93 L838.6,770.18 L839.8,771.01 L841.0,770.10 L842.2,771.52 L843.4,770.24 L844.6,771.22 L845.8,770.86 L847.0,770.67 L848.2,770.48 L849.4,770.56 L850.6,771.20 L851.8,770.83 L853.0,770.85 L854.2,770.39 L855.4,770.99 L856.6,770.26 L857.8,770.76 L859.0,771.03 L860.2,770.86 L861.4,770.92 L862.6,770.90 L863.8,770.30 L865.0,771.52 L866.2,771.09 L867.4,771.15 L868.6,771.52 L869.8,770.72 L871.0,770.53 L872.2,770.48 L873.4,770.50 L874.6,770.47 L875.8,770.50 L877.0,770.33 L878.2,770.77 L879.4,770.46 L880.6,770.59 L881.8,771.06 L883.0,770.50 L884.2,771.38 L885.4,771.27 L886.6,770.52 L887.8,771.33 L889.0,770.28 L890.2,770.15 L891.4,771.59 L892.6,770.05 L893.8,770.01 L895.0,771.39 L896.2,770.00 L897.4,771.05 L898.6,771.01 L899.8,770.72 L901.0,771.00 L902.2,772.40 L903.4,771.72 L904.6,771.72 L905.8,772.29 L907.0,772.99 L908.2,772.53 L909.4,772.45 L910.6,773.82 L911.8,772.95 L913.0,773.12 L914.2,773.29 L915.4,775.11 L916.6,774.46 L917.8,775.19 L919.0,775.25 L920.2,776.65 L921.4,776.37 L922.6,777.12 L923.8,778.39 L925.0,778.03 L926.2,779.35 L927.4,780.72 L928.6,781.16 L929.8,781.76 L931.0,783.21 L932.2,783.14 L933.4,784.35 L934.6,784.55 L935.8,784.80 L937.0,786.01 L938.2,786.44 L939.4,786.84 L940.6,787.94 L941.8,788.38 L943.0,789.60 L944.2,790.74 L945.4,791.46 L946.6,792.35 L947.8,792.14 L949.0,793.39 L950.2,794.43 L951.4,794.33 L952.6,795.85 L953.8,795.25 L955.0,797.25 L956.2,797.87 L957.4,798.72 L958.6,799.07 L959.8,799.35 L961.0,799.38 L962.2,800.30 L963.4,801.03 L964.6,801.02 L965.8,801.57 L967.0,802.53 L968.2,801.98 L969.4,802.53 L970.6,802.52 L971.8,804.34 L973.0,804.42 L974.2,804.96 L975.4,804.69 L976.6,804.94 L977.8,805.75 L979.0,806.72 L980.2,806.22 L981.4,806.66 L982.6,806.99 L983.8,808.00 L985.0,807.19 L986.2,808.71 L987.4,807.68 L988.6,809.11 L989.8,809.55 L991.0,809.41 L992.2,810.18 L993.4,809.78 L994.6,809.89 L995.8,810.58 L997.0,810.62 L998.2,811.54 L999.4,811.49 L1000.6,811.84 L1001.8,812.54 L1003.0,812.41 L1004.2,812.64 L1005.4,813.12 L1006.6,813.25 L1007.8,813.14 L1009.0,812.71 L1010.2,813.16 L1011.4,813.75 L1012.6,814.00 L1013.8,814.37 L1015.0,814.32 L1016.2,814.40 L1017.4,813.93 L1018.6,814.71 L1019.8,814.21 L1021.0,815.14 L1022.2,814.58 L1023.4,814.53 L1024.6,816.22 L1025.8,816.28 L1027.0,815.57 L1028.2,815.35 L1029.4,816.79 L1030.6,816.91 L1031.8,816.12 L1033.0,817.32 L1034.2,817.48 L1035.4,817.20 L1036.6,816.85 L1037.8,816.63 L1039.0,816.78 L1040.2,817.51 L1041.4,818.09 L1042.6,818.09 L1043.8,817.57 L1045.0,818.62 L1046.2,817.57 L1047.4,818.59 L1048.6,818.02 L1049.8,817.88 L1051.0,818.31 L1052.2,819.41 L1053.4,818.62 L1054.6,818.42 L1055.8,819.31 L1057.0,819.22 L1058.2,819.72 L1059.4,819.86 L1060.6,820.20 L1061.8,820.66 L1063.0,819.87 L1064.2,820.48 L1065.4,819.79 L1066.6,820.13 L1067.8,820.01 L1069.0,821.37 L1070.2,820.67 L1071.4,821.40 L1072.6,821.80 L1073.8,821.14 L1075.0,820.99 L1076.2,821.19 L1077.4,821.71 L1078.6,821.68 L1079.8,821.33 L1081.0,822.76 L1082.2,822.61 L1083.4,823.16 L1084.6,823.30 L1085.8,823.29 L1087.0,823.64 L1088.2,823.63 L1089.4,823.37 L1090.6,824.17 L1091.8,824.52 L1093.0,823.40 L1094.2,823.64 L1095.4,823.87 L1096.6,824.51 L1097.8,825.34 L1099.0,824.98 L1100.2,825.69 L1101.4,825.09 L1102.6,825.59 L1103.8,825.27 L1105.0,826.08 L1106.2,825.67 L1107.4,825.43 L1108.6,826.24 L1109.8,826.69 L1111.0,827.38 L1112.2,826.61 L1113.4,827.81 L1114.6,827.81 L1115.8,826.95 L1117.0,828.13 L1118.2,828.56 L1119.4,828.78 L1120.6,828.53 L1121.8,828.23 L1123.0,828.66 L1124.2,829.02 L1125.4,829.14 L1126.6,828.64 L1127.8,830.08 L1129.0,829.93 L1130.2,829.58 L1131.4,830.35 L1132.6,830.39 L1133.8,831.39 L1135.0,831.21 L1136.2,832.30 L1137.4,832.30 L1138.6,833.57 L1139.8,833.88 L1141.0,833.35 L1142.2,834.74 L1143.4,834.78 L1144.6,834.67 L1145.8,836.10 L1147.0,835.05 L1148.2,836.08 L1149.4,836.79 L1150.6,836.50 L1151.8,837.42 L1153.0,838.43 L1154.2,837.93 L1155.4,838.89 L1156.6,838.43 L1157.8,840.06 L1159.0,840.42 L1160.2,839.51 L1161.4,840.84 L1162.6,840.53 L1163.8,840.42 L1165.0,841.08 L1166.2,842.28 L1167.4,842.23 L1168.6,842.71 L1169.8,842.44 L1171.0,842.88 L1172.2,843.56 L1173.4,844.17 L1174.6,845.03 L1175.8,844.81 L1177.0,844.99 L1178.2,846.30 L1179.4,846.32 L1180.6,846.68 L1181.8,846.91 L1183.0,846.55 L1184.2,846.34 L1185.4,846.25 L1186.6,847.28 L1187.8,847.57 L1189.0,847.97 L1190.2,848.15 L1191.4,847.63 L1192.6,847.76 L1193.8,848.67 L1195.0,847.41 L1196.2,848.02 L1197.4,848.45 L1198.6,848.69 L1199.8,848.85 L1201.0,848.28 L1202.2,848.99 L1203.4,848.61 L1204.6,849.05 L1205.8,848.79 L1207.0,849.08 L1208.2,849.64 L1209.4,849.34 L1210.6,849.04 L1211.8,849.59 L1213.0,849.98 L1214.2,849.46 L1215.4,849.48 L1216.6,849.81 L1217.8,850.29 L1219.0,849.31 L1220.2,850.39 L1221.4,849.47 L1222.6,850.88 L1223.8,849.83 L1225.0,850.91 L1226.2,849.71 L1227.4,850.51 L1228.6,850.20 L1229.8,851.10 L1231.0,851.16 L1232.2,850.20 L1233.4,850.14 L1234.6,851.30 L1235.8,850.87 L1237.0,850.86 L1238.2,850.89 L1239.4,850.99 L1240.6,851.39 L1241.8,851.16 L1243.0,850.81 L1244.2,851.43 L1245.4,852.32 L1246.6,852.03 L1247.8,852.02 L1249.0,852.43 L1250.2,851.72 L1251.4,851.61 L1252.6,852.32 L1253.8,851.23 L1255.0,852.32 L1256.2,851.35 L1257.4,852.13 L1258.6,851.98 L1259.8,852.41 L1261.0,851.30 L1262.2,852.30 L1263.4,852.57 L1264.6,851.33 L1265.8,852.38 L1267.0,851.76 L1268.2,852.52 L1269.4,852.92 L1270.6,851.38 L1271.8,852.05 L1273.0,852.22 L1274.2,853.01 L1275.4,852.94 L1276.6,851.53 L1277.8,851.72 L1279.0,852.18 L1280.2,852.84 L1281.4,852.83 L1282.6,852.48 L1283.8,853.09 L1285.0,852.95 L1286.2,853.06 L1287.4,852.69 L1288.6,852.12 L1289.8,852.90 L1291.0,852.89 L1292.2,853.25 L1293.4,852.06 L1294.6,851.85 L1295.8,852.38 L1297.0,852.26 L1298.2,852.50 L1299.4,851.99 L1300.6,852.90 L1301.8,852.63 L1303.0,852.39 L1304.2,852.15 L1305.4,852.93 L1306.6,852.19 L1307.8,853.43 L1309.0,852.52 L1310.2,853.53 L1311.4,852.31 L1312.6,852.76 L1313.8,853.41 L1315.0,853.02 L1316.2,852.92 L1317.4,853.64 L1318.6,852.51 L1319.8,853.63 L1321.0,853.11 L1322.2,852.77 L1323.4,852.89 L1324.6,852.80 L1325.8,853.39 L1327.0,853.11 L1328.2,853.25 L1329.4,853.48 L1330.6,853.84 L1331.8,853.60 L1333.0,852.98 L1334.2,853.60 L1335.4,853.66 L1336.6,854.03 L1337.8,853.21 L1339.0,853.47 L1340.2,853.85 L1341.4,853.20 L1342.6,853.21 L1343.8,853.70 L1345.0,853.32 L1346.2,854.10 L1347.4,853.33 L1348.6,853.15 L1349.8,853.79 L1351.0,853.79 L1352.2,854.44 L1353.4,854.39 L1354.6,853.58 L1355.8,853.64 L1357.0,853.99 L1358.2,853.77 L1359.4,853.93 L1360.6,853.64 L1361.8,854.37 L1363.0,854.42 L1364.2,854.26 L1365.4,854.19 L1366.6,854.41 L1367.8,853.40 L1369.0,854.50 L1370.2,853.31 L1371.4,853.15 L1372.6,853.78 L1373.8,853.24 L1375.0,853.40 L1376.2,853.96 L1377.4,853.22 L1378.6,853.62 L1379.8,853.57 L1381.0,854.49 L1382.2,853.11 L1383.4,853.80 L1384.6,853.73 L1385.8,853.24 L1387.0,853.53 L1388.2,853.56 L1389.4,853.55 L1390.6,853.86 L1391.8,853.86 L1393.0,853.72 L1394.2,853.68 L1395.4,853.94 L1396.6,853.74 L1397.8,853.17 L1399.0,854.02 L1400.2,853.62 L1401.4,854.33 L1402.6,853.18 L1403.8,853.84 L1405.0,853.44 L1406.2,853.97 L1407.4,854.27 L1408.6,854.00 L1409.8,853.87 L1411.0,854.45 L1412.2,853.32 L1413.4,854.55 L1414.6,853.66 L1415.8,853.97 L1417.0,853.16 L1418.2,853.00 L1419.4,853.20 L1420.6,853.82 L1421.8,853.33 L1423.0,854.22 L1424.2,853.19 L1425.4,854.00 L1426.6,854.38 L1427.8,854.05 L1429.0,854.42 L1430.2,854.26 L1431.4,854.31 L1432.6,853.00 L1433.8,853.75 L1435.0,853.41 L1436.2,853.64 L1437.4,854.10 L1438.6,854.10 L1439.8,853.26 L1441.0,853.20 L1442.2,853.04 L1443.4,854.11 L1444.6,854.24 L1445.8,853.07 L1447.0,853.14 L1448.2,853.14 L1449.4,854.51 L1450.6,853.04 L1451.8,853.84 L1453.0,854.32 L1454.2,853.19 L1455.4,854.01 L1456.6,853.46 L1457.8,853.94 L1459.0,853.66 L1460.2,853.15 L1461.4,854.35 L1462.6,853.71 L1463.8,854.48 L1465.0,853.86 L1466.2,854.44 L1467.4,853.96 L1468.6,853.00 L1469.8,852.91 L1471.0,854.49 L1472.2,853.97 L1473.4,854.17 L1474.6,854.24 L1475.8,853.48 L1477.0,854.03 L1478.2,853.93 L1479.4,852.99 L1480.6,853.76 L1481.8,854.38 L1483.0,853.79 L1484.2,854.15 L1485.4,853.00 L1486.6,853.56 L1487.8,853.70 L1489.0,853.78 L1490.2,854.24 L1491.4,853.67 L1492.6,853.79 L1493.8,853.71 L1495.0,853.96 L1496.2,853.81 L1497.4,853.52 L1498.6,853.34 L1499.8,854.26 L1501.0,853.45 L1502.2,854.02 L1503.4,853.31 L1504.6,854.46 L1505.8,853.22 L1507.0,853.55 L1508.2,853.46 L1509.4,854.28 L1510.6,854.04 L1511.8,853.29 L1513.0,853.26 L1514.2,854.06 L1515.4,853.58 L1516.6,853.15 L1517.8,853.05 L1519.0,854.02 L1520.2,853.92 L1521.4,854.15 L1522.6,852.98 L1523.8,853.63 L1525.0,853.09 L1526.2,853.77 L1527.4,853.22 L1528.6,853.22 L1529.8,853.75 L1531.0,853.12 L1532.2,854.12 L1533.4,853.12 L1534.6,853.28 L1535.8,854.06 L1537.0,853.27 L1538.2,853.33 L1539.4,854.10 L1540.6,853.75 L1541.8,854.14 L1543.0,854.23 L1544.2,854.38 L1545.4,852.98 L1546.6,853.47 L1547.8,853.57 L1549.0,853.30 L1550.2,854.23 L1551.4,853.47 L1552.6,854.32 L1553.8,852.95 L1555.0,853.54 L1556.2,853.84 L1557.4,854.09 L1558.6,853.60 L1559.8,854.27 L1561.0,853.30 L1562.2,853.40 L1563.4,853.13 L1564.6,853.13 L1565.8,853.60 L1567.0,853.99 L1568.2,853.13 L1569.4,853.60 L1570.6,853.51 L1571.8,854.39 L1573.0,853.61 L1574.2,854.11 L1575.4,853.19 L1576.6,854.25 L1577.8,852.85 L1579.0,853.06 L1580.2,853.83 L1581.4,853.66 L1582.6,853.65 L1583.8,853.80 L1585.0,853.36 L1586.2,853.87 L1587.4,853.44 L1588.6,853.74 L1589.8,853.95 L1591.0,853.30 L1592.2,854.02 L1593.4,854.12 L1594.6,854.38 L1595.8,852.90 L1597.0,853.48 L1598.2,853.06 L1599.4,853.06 L1600.6,853.55 L1601.8,854.04 L1603.0,852.99 L1604.2,854.06 L1605.4,854.14 L1606.6,854.34 L1607.8,854.00 L1609.0,853.12 L1610.2,853.93 L1611.4,853.70 L1612.6,853.22 L1613.8,854.05 L1615.0,853.31 L1616.2,854.13 L1617.4,854.19 L1618.6,853.41 L1619.8,852.99 L1621.0,854.08 L1622.2,853.03 L1623.4,852.97 L1624.6,854.18 L1625.8,853.15 L1627.0,853.19 L1628.2,853.40 L1629.4,853.93 L1630.6,853.08 L1631.8,853.27 L1633.0,852.87 L1634.2,853.18 L1635.4,853.96 L1636.6,853.79 L1637.8,853.72 L1639.0,854.20 L1640.2,852.81 L1641.4,853.21 L1642.6,853.77 L1643.8,853.33 L1645.0,854.32 L1646.2,853.11 L1647.4,854.29 L1648.6,853.93 L1649.8,853.84 L1651.0,854.26 L1652.2,853.44 L1653.4,853.29 L1654.6,853.45 L1655.8,853.92 L1657.0,854.06 L1658.2,853.75 L1659.4,854.01 L1660.6,853.81 L1661.8,853.99 L1663.0,852.95 L1664.2,854.07 L1665.4,853.59 L1666.6,853.26 L1667.8,852.94 L1669.0,853.71 L1670.2,853.09 L1671.4,853.31 L1672.6,853.61 L1673.8,853.07 L1675.0,853.10 L1676.2,852.85 L1677.4,853.29 L1678.6,854.05 L1679.8,853.12 L1681.0,853.15 L1682.2,852.94 L1683.4,853.69 L1684.6,853.91 L1685.8,853.02 L1687.0,854.03 L1688.2,852.74 L1689.4,852.91 L1690.6,852.87 L1691.8,853.98 L1693.0,852.85 L1694.2,853.88 L1695.4,853.05 L1696.6,853.19 L1697.8,852.87 L1699.0,854.01 L1700.2,853.30 L1701.4,854.20 L1702.6,853.82 L1703.8,853.61 L1705.0,853.44 L1706.2,853.60 L1707.4,853.63 L1708.6,854.25 L1709.8,853.05 L1711.0,852.99" fill="none" stroke="#88ca3a" stroke-width="3.3"/><line x1="203" y1="798.3" x2="1180" y2="798.3" stroke="#e41c1c" stroke-width="1.6" stroke-dasharray="14 7"/><path d="M19.5,170.8 H44.4 L58,185.3 L44.4,199.8 H19.5 Q16.8,199.8 16.8,196.8 V173.8 Q16.8,170.8 19.5,170.8 Z" fill="#1c1a06" stroke="#d8d020" stroke-width="1.6"/><text x="29.00" y="189.9" font-size="13.08" fill="#e8e040" font-weight="normal" textLength="6.80" lengthAdjust="spacingAndGlyphs" stroke="#e8e040" stroke-width="0.45">C</text><text x="41.60" y="189.9" font-size="13.08" fill="#e8e040" font-weight="normal" textLength="4.01" lengthAdjust="spacingAndGlyphs" stroke="#e8e040" stroke-width="0.45">1</text><text x="64.90" y="191.5" font-size="21.80" fill="#f2f21e" font-weight="normal" textLength="35.61" lengthAdjust="spacingAndGlyphs" stroke="#f2f21e" stroke-width="0.35">EN1</text><path d="M19.5,393.1 H44.4 L58,407.6 L44.4,422.1 H19.5 Q16.8,422.1 16.8,419.1 V396.1 Q16.8,393.1 19.5,393.1 Z" fill="#081a1c" stroke="#1aa8b0" stroke-width="1.6"/><text x="29.00" y="412.20000000000005" font-size="13.08" fill="#22c8d0" font-weight="normal" textLength="6.80" lengthAdjust="spacingAndGlyphs" stroke="#22c8d0" stroke-width="0.45">C</text><text x="41.60" y="412.20000000000005" font-size="13.08" fill="#22c8d0" font-weight="normal" textLength="4.01" lengthAdjust="spacingAndGlyphs" stroke="#22c8d0" stroke-width="0.45">2</text><text x="64.90" y="413.8" font-size="21.80" fill="#20c4d0" font-weight="normal" textLength="37.61" lengthAdjust="spacingAndGlyphs" stroke="#20c4d0" stroke-width="0.35">EN2</text><path d="M19.5,613.7 H44.4 L58,628.45 L44.4,643.2 H19.5 Q16.8,643.2 16.8,640.2 V616.7 Q16.8,613.7 19.5,613.7 Z" fill="#1e0c10" stroke="#c84050" stroke-width="1.6"/><text x="29.00" y="633.0500000000001" font-size="13.08" fill="#f0f0f0" font-weight="normal" textLength="6.80" lengthAdjust="spacingAndGlyphs" stroke="#f0f0f0" stroke-width="0.45">C</text><text x="41.60" y="633.0500000000001" font-size="13.08" fill="#f0f0f0" font-weight="normal" textLength="4.01" lengthAdjust="spacingAndGlyphs" stroke="#f0f0f0" stroke-width="0.45">3</text><text x="64.90" y="634.0" font-size="21.80" fill="#e8405a" font-weight="normal" textLength="60.62" lengthAdjust="spacingAndGlyphs" stroke="#e8405a" stroke-width="0.35">S1-SM</text><path d="M19.5,839.5 H44.4 L58,853.25 L44.4,867.0 H19.5 Q16.8,867.0 16.8,864.0 V842.5 Q16.8,839.5 19.5,839.5 Z" fill="#88c83a" stroke="#88c83a" stroke-width="1.6"/><text x="29.00" y="857.85" font-size="13.08" fill="#101010" font-weight="normal" textLength="6.80" lengthAdjust="spacingAndGlyphs" stroke="#101010" stroke-width="0.45">C</text><text x="41.60" y="857.85" font-size="13.08" fill="#101010" font-weight="normal" textLength="4.01" lengthAdjust="spacingAndGlyphs" stroke="#101010" stroke-width="0.45">4</text><text x="64.90" y="858.8000000000001" font-size="21.80" fill="#88c83a" font-weight="normal" textLength="61.32" lengthAdjust="spacingAndGlyphs" stroke="#88c83a" stroke-width="0.35">SM-S2</text><path d="M172,75 L192,75 L183.2,85 Z" fill="#f78c20"/><path d="M173.3,299.3 H190.7 V317.3 H185.8 L182.2,323.5 L178.6,317.3 H173.3 Z" fill="#000" stroke="#f78c20" stroke-width="2.6"/><path d="M178,303.3 H186.8 M182.4,303.3 V313.6" stroke="#f78c20" stroke-width="2" fill="none"/><path d="M1690.6,382.5 L1702,372.7 V381 H1711 V384 H1702 V392.4 Z" fill="#22ccd4"/><path d="M1663,83 H1700 Q1704,83 1704,87 V123.5 Z" fill="#4e4e4e"/><circle cx="1695.4" cy="90.6" r="5.2" fill="none" stroke="#bdbdbd" stroke-width="1.8"/><line x1="1691.6" y1="94.6" x2="1684.5" y2="101.5" stroke="#bdbdbd" stroke-width="2.6" stroke-linecap="round"/><rect x="171.8" y="742.5" width="30.6" height="22.2" fill="#7cb83a" rx="4"/><text x="177.20" y="759.2" font-size="15.99" fill="#141414" font-weight="normal" textLength="19.01" lengthAdjust="spacingAndGlyphs" >C4</text><rect x="203" y="742.5" width="26" height="22.5" fill="#2c2c2c" rx="3"/><circle cx="216" cy="753.6" r="11" fill="#2a88d6"/><text x="210.80" y="759.2" font-size="15.99" fill="#ffffff" font-weight="normal" textLength="10.59" lengthAdjust="spacingAndGlyphs" >A</text><rect x="1154" y="742.5" width="26" height="22.5" fill="#2c2c2c" rx="3"/><circle cx="1167" cy="753" r="11" fill="#2a88d6"/><text x="1162.40" y="758.6" font-size="15.99" fill="#ffffff" font-weight="normal" textLength="9.79" lengthAdjust="spacingAndGlyphs" >B</text><rect x="1182" y="742.5" width="30.5" height="22.5" fill="#7cb83a" rx="4"/><text x="1187.50" y="759.2" font-size="15.99" fill="#141414" font-weight="normal" textLength="19.01" lengthAdjust="spacingAndGlyphs" >C4</text><circle cx="202.5" cy="770.7" r="4.2" fill="none" stroke="#e8e8e8" stroke-width="1.6"/><g stroke="#b8b8b8" stroke-width="1.5"><line x1="197.0" y1="765.2" x2="192.5" y2="760.7"/><line x1="208.0" y1="765.2" x2="212.5" y2="760.7"/><line x1="197.0" y1="776.2" x2="192.5" y2="780.7"/><line x1="208.0" y1="776.2" x2="212.5" y2="780.7"/></g><circle cx="1180.5" cy="847.8" r="4.2" fill="none" stroke="#e8e8e8" stroke-width="1.6"/><g stroke="#b8b8b8" stroke-width="1.5"><line x1="1175.0" y1="842.3" x2="1170.5" y2="837.8"/><line x1="1186.0" y1="842.3" x2="1190.5" y2="837.8"/><line x1="1175.0" y1="853.3" x2="1170.5" y2="857.8"/><line x1="1186.0" y1="853.3" x2="1190.5" y2="857.8"/></g><rect x="34.8" y="774" width="167" height="48.7" fill="#363636" rx="4" fill-opacity="0.95"/><text x="39.00" y="791.7" font-size="18.02" fill="#e0e0e0" font-weight="normal" textLength="80.20" lengthAdjust="spacingAndGlyphs" >t: 4.685 µs</text><text x="39.50" y="811.5" font-size="17.73" fill="#e0e0e0" font-weight="normal" textLength="85.39" lengthAdjust="spacingAndGlyphs" >v: 18.544 V</text><rect x="549" y="774" width="284" height="54.3" fill="#363636" rx="4" fill-opacity="0.95"/><text x="554.20" y="793.3" font-size="17.44" fill="#e0e0e0" font-weight="normal" textLength="108.82" lengthAdjust="spacingAndGlyphs" >Δt: 230.112 µs</text><text x="693.00" y="793.3" font-size="17.44" fill="#e0e0e0" font-weight="normal" textLength="106.19" lengthAdjust="spacingAndGlyphs" >1/Δt: 4.35 kHz</text><text x="554.20" y="816.7" font-size="17.44" fill="#e0e0e0" font-weight="normal" textLength="95.00" lengthAdjust="spacingAndGlyphs" >Δv: 17.268 V</text><text x="673.30" y="816.7" font-size="17.44" fill="#e0e0e0" font-weight="normal" textLength="128.70" lengthAdjust="spacingAndGlyphs" >Δv/Δt: 75.04 kV/s</text><rect x="1182" y="773" width="166.7" height="49.5" fill="#363636" rx="4" fill-opacity="0.95"/><text x="1185.50" y="791.25" font-size="17.73" fill="#e0e0e0" font-weight="normal" textLength="98.25" lengthAdjust="spacingAndGlyphs" >t: 234.797 µs</text><text x="1185.50" y="811.25" font-size="17.73" fill="#e0e0e0" font-weight="normal" textLength="75.76" lengthAdjust="spacingAndGlyphs" >v: 1.276 V</text><path d="M1505.7,794 V815.2 L1510.6,813.5 L1514.8,819.3 L1516.7,818.1 L1515.6,811.5 L1520.4,809 Z" fill="#1c1c1c" stroke="#ececec" stroke-width="1.5" stroke-linejoin="round"/><rect x="1730.5" y="42.5" width="190" height="926" fill="none" stroke="#6a625c" stroke-width="1"/><rect x="1911" y="0" width="9" height="1080" fill="#000" /><text x="1771.90" y="60" font-size="19.48" fill="#ececec" font-weight="bold" textLength="98.49" lengthAdjust="spacingAndGlyphs" >Add New...</text><rect x="1740.6" y="72.1" width="74.8" height="44.099999999999994" rx="6" fill="url(#bg)" stroke="#5c554f" stroke-width="1.2"/><rect x="1740.6" y="127.89999999999999" width="74.8" height="44.19999999999999" rx="6" fill="url(#bg)" stroke="#5c554f" stroke-width="1.2"/><rect x="1740.6" y="183.5" width="74.8" height="43.7" rx="6" fill="url(#bg)" stroke="#5c554f" stroke-width="1.2"/><rect x="1740.6" y="244.1" width="74.8" height="43.90000000000002" rx="6" fill="url(#bg)" stroke="#5c554f" stroke-width="1.2"/><rect x="1827.6" y="72.1" width="75.09999999999995" height="44.099999999999994" rx="6" fill="url(#bg)" stroke="#5c554f" stroke-width="1.2"/><rect x="1827.6" y="127.89999999999999" width="75.09999999999995" height="44.19999999999999" rx="6" fill="url(#bg)" stroke="#5c554f" stroke-width="1.2"/><rect x="1827.6" y="183.5" width="75.09999999999995" height="43.7" rx="6" fill="url(#bg)" stroke="#5c554f" stroke-width="1.2"/><rect x="1827.6" y="244.1" width="75.09999999999995" height="43.90000000000002" rx="6" fill="url(#bg)" stroke="#5c554f" stroke-width="1.2"/><text x="1747.80" y="99" font-size="18.90" fill="#ececec" font-weight="normal" textLength="60.21" lengthAdjust="spacingAndGlyphs" >Cursors</text><text x="1834.80" y="99" font-size="18.90" fill="#ececec" font-weight="normal" textLength="59.21" lengthAdjust="spacingAndGlyphs" >Callout</text><text x="1742.30" y="154.8" font-size="18.31" fill="#ececec" font-weight="normal" textLength="70.51" lengthAdjust="spacingAndGlyphs" >Measure</text><text x="1837.40" y="154.8" font-size="18.31" fill="#ececec" font-weight="normal" textLength="54.02" lengthAdjust="spacingAndGlyphs" >Search</text><text x="1749.30" y="200.7" font-size="18.60" fill="#ececec" font-weight="normal" textLength="56.99" lengthAdjust="spacingAndGlyphs" >Results</text><text x="1756.90" y="219.7" font-size="18.60" fill="#ececec" font-weight="normal" textLength="42.61" lengthAdjust="spacingAndGlyphs" >Table</text><text x="1848.40" y="210" font-size="18.31" fill="#ececec" font-weight="normal" textLength="32.41" lengthAdjust="spacingAndGlyphs" >Plot</text><text x="1835.50" y="271" font-size="18.31" fill="#ececec" font-weight="normal" textLength="57.99" lengthAdjust="spacingAndGlyphs" >More...</text><rect x="1735" y="235" width="173" height="1.1" fill="#6a625c" /><rect x="1735" y="297" width="173" height="1.1" fill="#6a625c" /><rect x="1766.3" y="255" width="22" height="18.8" fill="none" stroke="#c4c4c4" stroke-width="1.9" stroke-dasharray="2.6 1.9"/><circle cx="1778.8" cy="262.6" r="4.6" fill="#2d2d2d" stroke="#c4c4c4" stroke-width="1.7"/><line x1="1775.3" y1="266.2" x2="1770.8" y2="269.6" stroke="#c4c4c4" stroke-width="2.4" stroke-linecap="round"/><path d="M1783.3,268.6 L1791.4,274.8 L1787.8,275.2 L1789.8,278.6 L1788.2,279.3 L1786.2,275.8 L1783.6,278.2 Z" fill="#c4c4c4"/><circle cx="1723" cy="496.7" r="2.1" fill="#cccccc"/><circle cx="1723" cy="505" r="2.1" fill="#cccccc"/><circle cx="1723" cy="513.3" r="2.1" fill="#cccccc"/><clipPath id="cb13"><rect x="13" y="978.2" width="107.8" height="88.4" rx="5"/></clipPath><g clip-path="url(#cb13)"><rect x="13" y="978.2" width="107.8" height="88.4" fill="#cbcbcb" /><rect x="13" y="978.2" width="107.8" height="22.8" fill="#4b4622" /><rect x="13" y="1001" width="107.8" height="1.8" fill="#a8a8a8" /></g><text x="19.60" y="994.8" font-size="16.57" fill="#f4e830" font-weight="normal" textLength="36.40" lengthAdjust="spacingAndGlyphs" stroke="#f4e830" stroke-width="0.55">Ch 1</text><text x="19.70" y="1017.8" font-size="17.44" fill="#141414" font-weight="normal" textLength="54.39" lengthAdjust="spacingAndGlyphs" >2 V/div</text><text x="19.70" y="1040.9" font-size="17.44" fill="#141414" font-weight="normal" textLength="42.96" lengthAdjust="spacingAndGlyphs" >1 MΩ</text><text x="19.70" y="1063" font-size="17.44" fill="#141414" font-weight="normal" textLength="71.19" lengthAdjust="spacingAndGlyphs" >200 MHz</text><clipPath id="cb127"><rect x="127.2" y="978.2" width="107.8" height="88.4" rx="5"/></clipPath><g clip-path="url(#cb127)"><rect x="127.2" y="978.2" width="107.8" height="88.4" fill="#cbcbcb" /><rect x="127.2" y="978.2" width="107.8" height="22.8" fill="#1c4244" /><rect x="127.2" y="1001" width="107.8" height="1.8" fill="#a8a8a8" /></g><text x="133.80" y="994.8" font-size="16.57" fill="#26d0d8" font-weight="normal" textLength="36.40" lengthAdjust="spacingAndGlyphs" stroke="#26d0d8" stroke-width="0.55">Ch 2</text><text x="133.90" y="1017.8" font-size="17.44" fill="#141414" font-weight="normal" textLength="54.39" lengthAdjust="spacingAndGlyphs" >2 V/div</text><text x="133.90" y="1040.9" font-size="17.44" fill="#141414" font-weight="normal" textLength="42.96" lengthAdjust="spacingAndGlyphs" >1 MΩ</text><text x="133.90" y="1063" font-size="17.44" fill="#141414" font-weight="normal" textLength="71.19" lengthAdjust="spacingAndGlyphs" >200 MHz</text><clipPath id="cb241"><rect x="241.2" y="978.2" width="107.8" height="88.4" rx="5"/></clipPath><g clip-path="url(#cb241)"><rect x="241.2" y="978.2" width="107.8" height="88.4" fill="#cbcbcb" /><rect x="241.2" y="978.2" width="107.8" height="22.8" fill="#4a2628" /><rect x="241.2" y="1001" width="107.8" height="1.8" fill="#a8a8a8" /></g><text x="247.80" y="994.8" font-size="16.57" fill="#f4f4f4" font-weight="normal" textLength="36.40" lengthAdjust="spacingAndGlyphs" stroke="#f4f4f4" stroke-width="0.55">Ch 3</text><text x="247.90" y="1017.8" font-size="17.44" fill="#141414" font-weight="normal" textLength="54.39" lengthAdjust="spacingAndGlyphs" >5 V/div</text><text x="247.90" y="1040.9" font-size="17.44" fill="#141414" font-weight="normal" textLength="42.96" lengthAdjust="spacingAndGlyphs" >1 MΩ</text><text x="247.90" y="1063" font-size="17.44" fill="#141414" font-weight="normal" textLength="51.40" lengthAdjust="spacingAndGlyphs" >5 MHz</text><text x="326.7" y="1056.4" font-size="11.2" fill="#222" text-anchor="start" font-weight="bold" >B</text><text x="332.6" y="1059.8" font-size="8.6" fill="#222" text-anchor="start" font-weight="bold" >W</text><clipPath id="cb355"><rect x="355.2" y="978.2" width="107.8" height="88.4" rx="5"/></clipPath><g clip-path="url(#cb355)"><rect x="355.2" y="978.2" width="107.8" height="88.4" fill="#cbcbcb" /><rect x="355.2" y="978.2" width="107.8" height="22.8" fill="#8ccc34" /><rect x="355.2" y="1001" width="107.8" height="1.8" fill="#a8a8a8" /></g><text x="361.80" y="994.8" font-size="16.57" fill="#101010" font-weight="normal" textLength="36.40" lengthAdjust="spacingAndGlyphs" stroke="#101010" stroke-width="0.55">Ch 4</text><text x="361.90" y="1017.8" font-size="17.44" fill="#141414" font-weight="normal" textLength="54.39" lengthAdjust="spacingAndGlyphs" >5 V/div</text><text x="361.90" y="1040.9" font-size="17.44" fill="#141414" font-weight="normal" textLength="42.96" lengthAdjust="spacingAndGlyphs" >1 MΩ</text><text x="361.90" y="1063" font-size="17.44" fill="#141414" font-weight="normal" textLength="71.19" lengthAdjust="spacingAndGlyphs" >100 MHz</text><text x="440.7" y="1056.4" font-size="11.2" fill="#222" text-anchor="start" font-weight="bold" >B</text><text x="446.6" y="1059.8" font-size="8.6" fill="#222" text-anchor="start" font-weight="bold" >W</text><rect x="948" y="973" width="1.2" height="94" fill="#5a524c" /><rect x="1129" y="973" width="1.2" height="94" fill="#5a524c" /><rect x="961.9" y="973.6" width="46.20000000000009" height="92.6" rx="6" fill="url(#bg)" stroke="#5c554f" stroke-width="1.2"/><line x1="967.0" y1="983.5" x2="1003.0" y2="983.5" stroke="#f08c24" stroke-width="3.2" stroke-linecap="round"/><text x="969.10" y="1012.1" font-size="19.19" fill="#ececec" font-weight="normal" textLength="31.69" lengthAdjust="spacingAndGlyphs" >Add</text><text x="968.20" y="1030.6" font-size="19.19" fill="#ececec" font-weight="normal" textLength="33.67" lengthAdjust="spacingAndGlyphs" >New</text><text x="965.40" y="1049.8" font-size="19.19" fill="#ececec" font-weight="normal" textLength="38.91" lengthAdjust="spacingAndGlyphs" >Math</text><rect x="1015.8000000000001" y="973.6" width="46.50000000000004" height="92.6" rx="6" fill="url(#bg)" stroke="#5c554f" stroke-width="1.2"/><line x1="1021.0500000000002" y1="983.5" x2="1057.0500000000002" y2="983.5" stroke="#b8b8c8" stroke-width="3.2" stroke-linecap="round"/><text x="1023.15" y="1012.1" font-size="19.19" fill="#ececec" font-weight="normal" textLength="31.69" lengthAdjust="spacingAndGlyphs" >Add</text><text x="1022.25" y="1030.6" font-size="19.19" fill="#ececec" font-weight="normal" textLength="33.67" lengthAdjust="spacingAndGlyphs" >New</text><text x="1027.20" y="1049.8" font-size="19.19" fill="#ececec" font-weight="normal" textLength="24.08" lengthAdjust="spacingAndGlyphs" >Ref</text><rect x="1069.6" y="973.6" width="46.70000000000009" height="92.6" rx="6" fill="url(#bg)" stroke="#5c554f" stroke-width="1.2"/><line x1="1074.95" y1="983.5" x2="1110.95" y2="983.5" stroke="#c858f0" stroke-width="3.2" stroke-linecap="round"/><text x="1077.05" y="1012.1" font-size="19.19" fill="#ececec" font-weight="normal" textLength="31.69" lengthAdjust="spacingAndGlyphs" >Add</text><text x="1076.15" y="1030.6" font-size="19.19" fill="#ececec" font-weight="normal" textLength="33.67" lengthAdjust="spacingAndGlyphs" >New</text><text x="1080.20" y="1049.8" font-size="19.19" fill="#ececec" font-weight="normal" textLength="26.21" lengthAdjust="spacingAndGlyphs" >Bus</text><clipPath id="ib1143"><rect x="1143" y="979.3" width="238.0999999999999" height="86.6" rx="5"/></clipPath><g clip-path="url(#ib1143)"><rect x="1143" y="979.3" width="238.0999999999999" height="86.6" fill="#cbcbcb" /><rect x="1143" y="979.3" width="238.0999999999999" height="22.4" fill="#58585a" /><rect x="1143" y="1001.7" width="238.0999999999999" height="2.2" fill="#a4a4a4" /></g><rect x="1143" y="979.3" width="238.0999999999999" height="86.6" rx="5" fill="none" stroke="#121212" stroke-width="1.2"/><text x="1149.50" y="995.8" font-size="18.31" fill="#eeeeee" font-weight="normal" textLength="87.09" lengthAdjust="spacingAndGlyphs" >Horizontal</text><text x="1148.00" y="1018" font-size="17.44" fill="#141414" font-weight="normal" textLength="68.20" lengthAdjust="spacingAndGlyphs" >40 µs/div</text><text x="1275.40" y="1018" font-size="17.44" fill="#141414" font-weight="normal" textLength="50.80" lengthAdjust="spacingAndGlyphs" >400 µs</text><text x="1148.50" y="1040.4" font-size="17.44" fill="#141414" font-weight="normal" textLength="99.49" lengthAdjust="spacingAndGlyphs" >SR: 625 MS/s</text><text x="1276.70" y="1040.4" font-size="17.44" fill="#141414" font-weight="normal" textLength="65.82" lengthAdjust="spacingAndGlyphs" >1.6 ns/pt</text><text x="1148.50" y="1062.2" font-size="17.44" fill="#141414" font-weight="normal" textLength="93.69" lengthAdjust="spacingAndGlyphs" >RL: 250 kpts</text><path d="M1276,1049.8 H1285.2 V1059.5 H1282.8 L1280.6,1063.5 L1278.4,1059.5 H1276 Z" fill="#000" stroke="#f78c20" stroke-width="1.3"/><path d="M1278.2,1052.4 H1283 M1280.6,1052.4 V1057.6" stroke="#ffffff" stroke-width="1.5" fill="none"/><text x="1292.30" y="1062.2" font-size="17.44" fill="#141414" font-weight="normal" textLength="35.18" lengthAdjust="spacingAndGlyphs" >10%</text><clipPath id="ib1389"><rect x="1389" y="979.3" width="190" height="86.6" rx="5"/></clipPath><g clip-path="url(#ib1389)"><rect x="1389" y="979.3" width="190" height="86.6" fill="#cbcbcb" /><rect x="1389" y="979.3" width="190" height="22.4" fill="#58585a" /><rect x="1389" y="1001.7" width="190" height="2.2" fill="#a4a4a4" /></g><rect x="1389" y="979.3" width="190" height="86.6" rx="5" fill="none" stroke="#121212" stroke-width="1.2"/><text x="1395.50" y="995.8" font-size="18.31" fill="#eeeeee" font-weight="normal" textLength="58.81" lengthAdjust="spacingAndGlyphs" >Trigger</text><rect x="1394.8" y="1003.6" width="34.6" height="19" rx="5" fill="#20d0d8" stroke="#121212" stroke-width="1.2"/><text x="1407.40" y="1016.9" font-size="17.88" fill="#101010" font-weight="normal" textLength="8.87" lengthAdjust="spacingAndGlyphs" >2</text><path d="M1440.2,1018.6 H1445.2 L1455.6,1007.4 H1459" fill="none" stroke="#5a5a90" stroke-width="1.5"/><text x="1469.60" y="1017.7" font-size="18.02" fill="#141414" font-weight="normal" textLength="50.32" lengthAdjust="spacingAndGlyphs" >2.24 V</text><clipPath id="ib1587"><rect x="1587.1" y="979.3" width="178.10000000000014" height="86.6" rx="5"/></clipPath><g clip-path="url(#ib1587)"><rect x="1587.1" y="979.3" width="178.10000000000014" height="86.6" fill="#cbcbcb" /><rect x="1587.1" y="979.3" width="178.10000000000014" height="22.4" fill="#58585a" /><rect x="1587.1" y="1001.7" width="178.10000000000014" height="2.2" fill="#a4a4a4" /></g><rect x="1587.1" y="979.3" width="178.10000000000014" height="86.6" rx="5" fill="none" stroke="#121212" stroke-width="1.2"/><text x="1593.60" y="995.8" font-size="18.31" fill="#eeeeee" font-weight="normal" textLength="92.42" lengthAdjust="spacingAndGlyphs" >Acquisition</text><text x="1592.30" y="1017.7" font-size="18.02" fill="#141414" font-weight="normal" textLength="41.70" lengthAdjust="spacingAndGlyphs" >Auto,</text><text x="1686.60" y="1017.7" font-size="18.02" fill="#141414" font-weight="normal" textLength="58.80" lengthAdjust="spacingAndGlyphs" >Analyze</text><text x="1592.30" y="1040.6" font-size="18.02" fill="#141414" font-weight="normal" textLength="117.21" lengthAdjust="spacingAndGlyphs" >Sample: 12 bits</text><clipPath id="acq"><rect x="1587" y="1040" width="178" height="25.5"/></clipPath><g clip-path="url(#acq)"><text x="1592.30" y="1062.5" font-size="18.02" fill="#141414" font-weight="normal" textLength="82.82" lengthAdjust="spacingAndGlyphs" >Single: 1 /1</text></g><rect x="1779" y="973" width="1.2" height="94" fill="#6a625c" /><rect x="1792.7" y="976.4" width="107.7" height="43.6" rx="5.5" fill="#fe2029" stroke="#5a5a5a" stroke-width="1"/><text x="1812.60" y="1001.9" font-size="16.86" fill="#ffffff" font-weight="bold" textLength="68.59" lengthAdjust="spacingAndGlyphs" >Stopped</text><clipPath id="dc"><rect x="1792.1" y="1026.5" width="107.7" height="36.1" rx="5.5"/></clipPath><g clip-path="url(#dc)"><rect x="1792.1" y="1026.5" width="107.7" height="36.1" fill="#c8c8c8" /></g><text x="1798.70" y="1043.7" font-size="18.31" fill="#141414" font-weight="normal" textLength="94.00" lengthAdjust="spacingAndGlyphs" >27 Jun 2023</text><clipPath id="dc2"><rect x="1792" y="1045" width="110" height="19.3"/></clipPath><g clip-path="url(#dc2)"><text x="1802.50" y="1064.2" font-size="18.31" fill="#141414" font-weight="normal" textLength="87.39" lengthAdjust="spacingAndGlyphs" >1:10:09 PM</text></g>
</svg>
</body></html>
